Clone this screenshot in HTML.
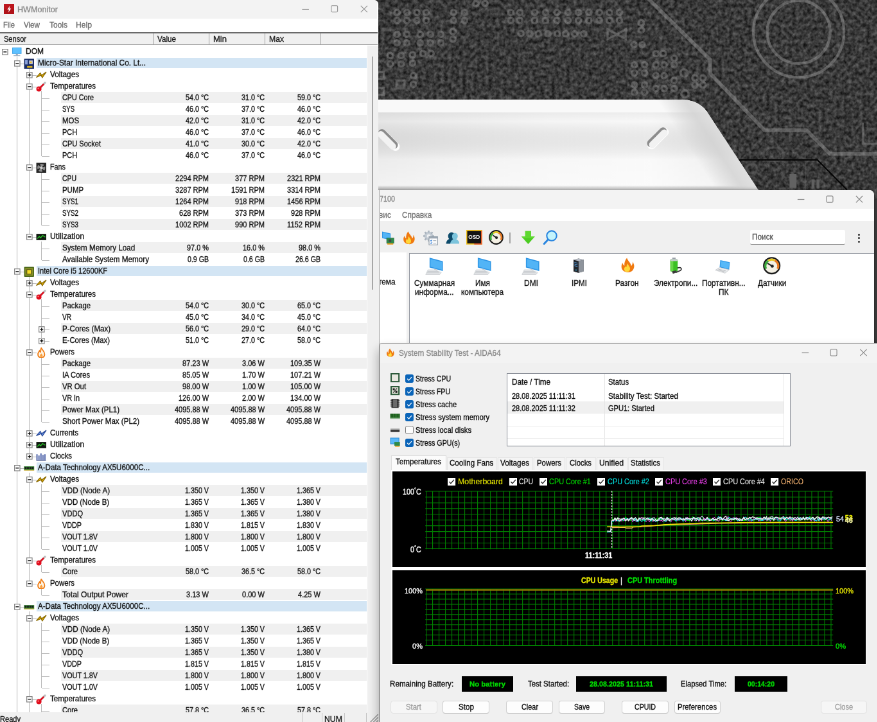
<!DOCTYPE html><html lang="en"><head><meta charset="utf-8"><title>HWMonitor / AIDA64 System Stability Test</title><style>
*{box-sizing:border-box;margin:0;padding:0}
html,body{width:877px;height:722px;overflow:hidden;background:#3b3b3b}
#root{position:absolute;left:0;top:0;width:877px;height:722px;overflow:hidden;zoom:1.5571;transform:scale(0.642219);transform-origin:0 0;will-change:transform}
body{position:relative;font-family:"Liberation Sans","DejaVu Sans",sans-serif;font-size:7.4px;color:#1a1a1a;line-height:1}
.a{position:absolute}
.t{position:absolute;white-space:nowrap;line-height:10px;height:10px;-webkit-text-stroke:0.22px;transform-origin:0 50%}
.r{text-align:right}
.c{text-align:center}
.g{color:#7d7d7d}
</style></head><body><div id="root">
<svg class="a" style="left:0;top:0" width="877" height="722" viewBox="0 0 877 722">
<defs><filter id="nz" x="0" y="0" width="100%" height="100%" color-interpolation-filters="sRGB"><feTurbulence type="fractalNoise" baseFrequency="0.27 0.25" numOctaves="3" seed="11" result="t"/><feColorMatrix in="t" type="matrix" values="0.43 0 0 0 0.012  0.43 0 0 0 0.012  0.43 0 0 0 0.012  0 0 0 0 1"/></filter><linearGradient id="dv" x1="0" y1="0" x2="0" y2="1"><stop offset="0" stop-color="#fbfbfb"/><stop offset="0.12" stop-color="#f9f9f9"/><stop offset="0.16" stop-color="#f0f0f0"/><stop offset="0.5" stop-color="#f6f6f6"/><stop offset="0.85" stop-color="#e9e9e9"/><stop offset="1" stop-color="#e2e2e2"/></linearGradient><linearGradient id="dh" x1="0" y1="0" x2="1" y2="0"><stop offset="0" stop-color="#fff" stop-opacity="0"/><stop offset="0.35" stop-color="#fff" stop-opacity=".55"/><stop offset="0.7" stop-color="#fff" stop-opacity="0"/><stop offset="0.86" stop-color="#c8c8c8" stop-opacity=".5"/><stop offset="1" stop-color="#fff" stop-opacity=".9"/></linearGradient></defs>
<rect x="370" y="0" width="507" height="200" fill="#3e3e3e"/>
<rect x="370" y="0" width="507" height="200" filter="url(#nz)"/>
<g fill="none" stroke="#909090" stroke-width="2.2" opacity=".42">
<circle cx="397.0" cy="12.4" r="2.7"/>
<circle cx="407.0" cy="12.4" r="2.7"/>
<circle cx="417.0" cy="12.4" r="2.7"/>
<circle cx="426.2" cy="12.4" r="2.7"/>
<circle cx="453.5" cy="12.4" r="2.7"/>
<circle cx="464.5" cy="12.4" r="2.7"/>
<circle cx="534.6" cy="12.4" r="2.7"/>
<circle cx="545.5" cy="12.4" r="2.7"/>
<circle cx="557.0" cy="12.4" r="2.7"/>
<circle cx="568.0" cy="12.4" r="2.7"/>
<circle cx="578.4" cy="12.4" r="2.7"/>
<circle cx="588.8" cy="12.4" r="2.7"/>
<circle cx="599.3" cy="12.4" r="2.7"/>
<circle cx="609.4" cy="12.4" r="2.7"/>
<circle cx="619.4" cy="12.4" r="2.7"/>
<circle cx="510.7" cy="12.4" r="2.7"/>
<circle cx="519.8" cy="12.4" r="2.7"/>
<circle cx="397.0" cy="20.4" r="2.7"/>
<circle cx="407.0" cy="20.4" r="2.7"/>
<circle cx="417.0" cy="20.4" r="2.7"/>
<circle cx="426.2" cy="20.4" r="2.7"/>
<circle cx="453.5" cy="20.4" r="2.7"/>
<circle cx="464.5" cy="20.4" r="2.7"/>
<circle cx="534.6" cy="20.4" r="2.7"/>
<circle cx="545.5" cy="20.4" r="2.7"/>
<circle cx="557.0" cy="20.4" r="2.7"/>
<circle cx="568.0" cy="20.4" r="2.7"/>
<circle cx="578.4" cy="20.4" r="2.7"/>
<circle cx="588.8" cy="20.4" r="2.7"/>
<circle cx="599.3" cy="20.4" r="2.7"/>
<circle cx="609.4" cy="20.4" r="2.7"/>
<circle cx="619.4" cy="20.4" r="2.7"/>
<circle cx="510.7" cy="20.4" r="2.7"/>
<circle cx="519.8" cy="20.4" r="2.7"/>
<circle cx="397.0" cy="34.3" r="2.7"/>
<circle cx="406.7" cy="34.3" r="2.7"/>
<circle cx="420.2" cy="34.3" r="2.7"/>
<circle cx="430.4" cy="34.3" r="2.7"/>
<circle cx="440.8" cy="34.3" r="2.7"/>
<circle cx="397.0" cy="42.9" r="2.7"/>
<circle cx="406.7" cy="42.9" r="2.7"/>
<circle cx="420.2" cy="42.9" r="2.7"/>
<circle cx="430.4" cy="42.9" r="2.7"/>
<circle cx="440.8" cy="42.9" r="2.7"/>
<circle cx="453.0" cy="31.4" r="2.7"/>
<circle cx="453.0" cy="39.2" r="2.7"/>
<circle cx="476.0" cy="3.6" r="2.7"/>
<circle cx="485.0" cy="3.6" r="2.7"/>
<circle cx="521.0" cy="33.4" r="2.7"/>
<circle cx="529.3" cy="33.4" r="2.7"/>
<circle cx="390.2" cy="55.5" r="2.7"/>
<circle cx="390.2" cy="64.0" r="2.7"/>
<circle cx="401.2" cy="55.5" r="2.7"/>
<circle cx="401.2" cy="64.0" r="2.7"/>
<circle cx="412.5" cy="54.8" r="2.7"/>
<circle cx="412.5" cy="63.2" r="2.7"/>
<circle cx="423.0" cy="53.6" r="2.7"/>
<circle cx="431.0" cy="53.6" r="2.7"/>
<circle cx="413.4" cy="75.7" r="2.7"/>
<circle cx="413.4" cy="84.3" r="2.7"/>
<circle cx="530.0" cy="33.8" r="2.7"/>
<circle cx="538.2" cy="33.8" r="2.7"/>
<circle cx="547.9" cy="33.8" r="2.7"/>
<circle cx="557.4" cy="33.8" r="2.7"/>
<circle cx="565.6" cy="33.8" r="2.7"/>
<circle cx="574.7" cy="33.8" r="2.7"/>
<circle cx="583.8" cy="33.8" r="2.7"/>
<circle cx="641.3" cy="22.8" r="2.7"/>
<circle cx="641.3" cy="30.1" r="2.7"/>
<circle cx="634.0" cy="44.7" r="2.7"/>
<circle cx="642.2" cy="44.7" r="2.7"/>
<circle cx="655.9" cy="53.5" r="2.7"/>
<circle cx="663.2" cy="53.5" r="2.7"/>
<circle cx="674.2" cy="58.4" r="2.7"/>
<circle cx="634.4" cy="64.8" r="2.7"/>
<circle cx="644.6" cy="64.8" r="2.7"/>
<circle cx="655.9" cy="64.8" r="2.7"/>
<circle cx="664.1" cy="64.8" r="2.7"/>
<circle cx="674.2" cy="64.8" r="2.7"/>
<circle cx="634.4" cy="73.0" r="2.7"/>
<circle cx="644.6" cy="73.0" r="2.7"/>
<circle cx="655.9" cy="75.7" r="2.7"/>
<circle cx="664.1" cy="75.7" r="2.7"/>
<circle cx="674.2" cy="80.3" r="2.7"/>
<circle cx="634.4" cy="84.9" r="2.7"/>
<circle cx="644.6" cy="84.9" r="2.7"/>
<circle cx="655.9" cy="88.5" r="2.7"/>
<circle cx="664.1" cy="88.5" r="2.7"/>
<circle cx="674.2" cy="88.5" r="2.7"/>
<circle cx="634.4" cy="92.2" r="2.7"/>
<circle cx="644.6" cy="92.2" r="2.7"/>
<circle cx="695.0" cy="78.0" r="2.7"/>
<circle cx="703.0" cy="78.0" r="2.7"/>
<circle cx="695.0" cy="85.0" r="2.7"/>
<circle cx="703.0" cy="85.0" r="2.7"/>
<circle cx="684.2" cy="73" r="3.6"/><circle cx="685" cy="94" r="3.6"/>
<rect x="396.5" y="80.5" width="8" height="8"/><rect x="377" y="72" width="7" height="7"/><rect x="377" y="88" width="7" height="7"/>
<path d="M607.6 29.4 L625.8 39 V29.4 L607.6 39 Z"/>
<circle cx="798.7" cy="32" r="31.5" stroke="#a0a0a0" stroke-width="2.8"/><circle cx="798.7" cy="32" r="45.3" stroke="#a0a0a0" stroke-width="2.8"/>
<path d="M648.5 -1 L710.3 59.7 V73.6 L764.4 130.1 H806.4 L830.1 153.9 H880" stroke="#a0a0a0" stroke-width="3.6"/>
<path d="M863 122.8 V143.8 H880" stroke="#909090" stroke-width="2"/>
<rect x="763.5" y="147.8" width="20" height="13" rx="6" stroke="#666"/><circle cx="751.7" cy="168.5" r="5" stroke="#606060"/><path d="M805.5 152 V190" stroke="#5c5c5c" stroke-width="1"/><path d="M732 150 q8 0 8 8" stroke="#606060"/>
</g>
<rect x="789.5" y="174" width="7" height="14" fill="#626262"/><rect x="811.5" y="179.5" width="3" height="9" fill="#606060"/><rect x="816.5" y="179.5" width="3" height="9" fill="#606060"/>
<path d="M738.5 159.9 H817.4 L847 189.8" stroke="#050505" stroke-width="1.3" fill="none"/>
<defs><linearGradient id="dface" x1="378" y1="0" x2="720" y2="0" gradientUnits="userSpaceOnUse"><stop offset="0" stop-color="#e6e6e6"/><stop offset="0.2" stop-color="#ededed"/><stop offset="0.5" stop-color="#f5f5f5"/><stop offset="0.8" stop-color="#f8f8f8"/><stop offset="1" stop-color="#ebebeb"/></linearGradient><linearGradient id="dvert" x1="0" y1="112" x2="0" y2="191" gradientUnits="userSpaceOnUse"><stop offset="0" stop-color="#000" stop-opacity=".045"/><stop offset="0.12" stop-color="#000" stop-opacity="0"/><stop offset="0.6" stop-color="#fff" stop-opacity=".25"/><stop offset="0.93" stop-color="#fff" stop-opacity=".5"/><stop offset="1" stop-color="#000" stop-opacity=".06"/></linearGradient><linearGradient id="dbev" x1="690" y1="150" x2="745" y2="114" gradientUnits="userSpaceOnUse"><stop offset="0" stop-color="#cfcfcf" stop-opacity="0"/><stop offset="0.35" stop-color="#d2d2d2" stop-opacity=".8"/><stop offset="0.62" stop-color="#e2e2e2" stop-opacity=".9"/><stop offset="0.8" stop-color="#fbfbfb" stop-opacity="1"/><stop offset="1" stop-color="#f2f2f2" stop-opacity="1"/></linearGradient><clipPath id="dclip"><path d="M370 99.5 L681 99.5 Q696 99.7 704.5 108.7 L707 111.7 L759 191 L370 191 Z"/></clipPath></defs>
<g clip-path="url(#dclip)">
<rect x="370" y="99" width="400" height="93" fill="url(#dface)"/>
<rect x="370" y="112" width="400" height="80" fill="url(#dvert)"/>
<rect x="370" y="99" width="400" height="13.4" fill="#f9f9f9"/>
<path d="M640 99 L770 99 L770 192 L690 192 Z" fill="url(#dbev)"/>
</g>
<g transform="translate(388.0 139.0)"><rect x="-13.4" y="-4.3" width="26.8" height="8.6" rx="4.3" fill="#fdfdfd" transform="translate(1 1.2) rotate(45)"/><rect x="-12.4" y="-3.9" width="24.8" height="7.8" rx="3.9" fill="#8c8c8c" transform="rotate(45)"/><rect x="-11.8" y="-3.3" width="23.6" height="6.6" rx="3.3" fill="#f2f2f2" transform="translate(-1.2 1.3) rotate(45)"/></g>
<g transform="translate(657.0 137.3)"><rect x="-13.4" y="-4.3" width="26.8" height="8.6" rx="4.3" fill="#fdfdfd" transform="translate(1 1.2) rotate(-45)"/><rect x="-12.4" y="-3.9" width="24.8" height="7.8" rx="3.9" fill="#8c8c8c" transform="rotate(-45)"/><rect x="-11.8" y="-3.3" width="23.6" height="6.6" rx="3.3" fill="#f2f2f2" transform="translate(1.3 1.4) rotate(-45)"/></g>
</svg>
<div class="a" style="left:372.00px;top:189.80px;width:501.80px;height:160.00px;background:#f0f0f0;border-radius:0 4.5px 0 0;box-shadow:0 0 3px rgba(0,0,0,.5);"></div>
<div class="a" style="left:372.00px;top:189.80px;width:501.80px;height:19.20px;background:#f3f3f3;border-radius:0 4.5px 0 0;"></div>
<div class="t g" style="left:379.50px;top:194.60px;font-size:8.09px;transform:scaleX(0.8570);color:#8a8a8a;">7100</div>
<svg class="a" style="left:790px;top:190px" width="84" height="19" viewBox="0 0 84 19" fill="none" stroke="#8a8a8a" stroke-width="0.75"><path d="M7.6 9.3 H14.4"/><rect x="36.6" y="5.9" width="6.4" height="6.4" rx="1"/><path d="M66.1 5.8 L72.7 12.4 M72.7 5.8 L66.1 12.4"/></svg>
<div class="a" style="left:372.00px;top:208.90px;width:501.80px;height:12.30px;background:#ffffff;"></div>
<div class="t g" style="left:379.00px;top:210.70px;font-size:7.98px;transform:scaleX(0.9531);color:#777;">вис</div>
<div class="t g" style="left:402.20px;top:210.70px;font-size:7.98px;transform:scaleX(0.9530);color:#777;">Справка</div>
<svg class="a" style="left:381.50px;top:230.50px" width="13.00" height="15.00" viewBox="0 0 20 22"><path d="M1 1 L14 4 L14 14 L1 11 Z" fill="#2f96e6"/><path d="M2 2.4 L13 5 L13 12.6 L2 10 Z" fill="#52b4f6"/><rect x="8" y="11" width="11" height="8" fill="#2e8a4a" stroke="#1c5a30" stroke-width="0.6"/><rect x="11" y="13" width="4" height="4" fill="#444"/><rect x="9" y="19" width="9" height="2" fill="#e8a020"/></svg>
<svg class="a" style="left:401.50px;top:230.50px" width="14.50" height="14.50" viewBox="0 0 21 20.5"><path d="M10 1 C11 5 15 7 15.5 11.5 C17 10 17.5 8 17.2 6 C19.5 9 20 13 18 16 C16.5 18.6 13.5 19.6 10.5 19.4 C6.5 19.2 3.2 16.8 3 12.8 C2.8 10.6 3.6 8.8 4.4 7.4 C4.8 9 5.6 10.4 6.8 11 C6.4 7.6 7.6 3.6 10 1 Z" fill="#f07a10"/><path d="M10.5 8 C11.5 10.5 14 12 14 15 C14 17.5 12.2 19 10.2 19 C8.2 19 6.4 17.6 6.4 15.4 C6.4 13.8 7.4 12.8 7.8 11.6 C8.4 12.4 8.8 12.8 9.4 12.8 C9.6 11.2 9.8 9.6 10.5 8 Z" fill="#ffd83a"/></svg>
<svg class="a" style="left:423.50px;top:230.50px" width="15.00" height="15.00" viewBox="0 0 22 22"><circle cx="8" cy="8" r="6.5" fill="#c4ccd4"/><circle cx="8" cy="8" r="2.6" fill="#eef0f2"/><path d="M8 0 V3 M8 13 V16 M0 8 H3 M13 8 H16 M2.3 2.3 L4.5 4.5 M11.5 11.5 L13.7 13.7 M2.3 13.7 L4.5 11.5 M11.5 4.5 L13.7 2.3" stroke="#aab4be" stroke-width="2.4"/><rect x="8.5" y="9" width="12.5" height="12" fill="#fdfdfd" stroke="#8a96a2" stroke-width="1"/><rect x="8.5" y="9" width="12.5" height="2.6" fill="#9aa6b2"/><path d="M10.5 14.5 l1 1 l1.6 -2 M10.5 18 l1 1 l1.6 -2" stroke="#2a7ad8" stroke-width="1" fill="none"/><path d="M14.5 14.8 H19 M14.5 18.4 H19" stroke="#8a96a2" stroke-width="0.8"/></svg>
<svg class="a" style="left:445.50px;top:231.00px" width="14.00" height="14.00" viewBox="0 0 20 20"><path d="M13 2.5 C15.8 2.5 17.4 4.8 17.2 7.4 C17 9.4 16 10.8 15.2 11.6 C17.6 12.6 19.4 14.4 19.6 18 L6 18 C6.2 14.4 8 12.6 10.4 11.6 C9.4 10.6 8.6 9.2 8.6 7.2 C8.6 4.6 10.4 2.5 13 2.5 Z" fill="#7cc4dc"/><path d="M8.5 1.5 C10 1.5 11 2.2 11.6 3 C9.6 4 8.8 6 9.2 8.4 C9.4 9.8 10 10.8 10.6 11.6 C8.4 12.6 6.8 14.4 6.4 18 L0.6 18 C0.8 14 2.8 12 5 11 C4 10 3.4 8.6 3.4 6.8 C3.4 3.8 5.6 1.5 8.5 1.5 Z" fill="#0c4a6a"/></svg>
<svg class="a" style="left:466.40px;top:230.20px" width="15.80" height="14.60" viewBox="0 0 22 20"><rect x="0.6" y="0.6" width="20.8" height="18.8" fill="#141414" stroke="#f0c020" stroke-width="1.6"/><path d="M21.2 1 V19.4 H11" stroke="#e85a30" stroke-width="1.4" fill="none"/><text x="11" y="12.6" font-family="Liberation Sans,sans-serif" font-size="7.4" font-weight="bold" fill="#fff" text-anchor="middle">OSD</text></svg>
<svg class="a" style="left:488.50px;top:229.80px" width="14.80" height="14.80" viewBox="0 0 20 20"><circle cx="10" cy="10" r="9" fill="#f4f0e4" stroke="#1a1a1a" stroke-width="1.8"/><path d="M3.4 13.5 A7 7 0 0 1 6 4.4" stroke="#3aa83a" stroke-width="2.4" fill="none"/><path d="M6 4.4 A7 7 0 0 1 13.5 4" stroke="#e8c820" stroke-width="2.4" fill="none"/><path d="M13.5 4 A7 7 0 0 1 16.6 13.5" stroke="#e87820" stroke-width="2.4" fill="none"/><path d="M10.5 10.5 L5.2 7.2" stroke="#222" stroke-width="1.6"/><circle cx="10.5" cy="10.5" r="1.8" fill="#222"/></svg>
<div class="a" style="left:509.40px;top:232.40px;width:0.90px;height:10.80px;background:#a4a4a4;"></div>
<svg class="a" style="left:520.80px;top:230.80px" width="14.60" height="14.00" viewBox="0 0 20 19"><path d="M6 0.5 H14 V8 H19.2 L10 18.5 L0.8 8 H6 Z" fill="#4ccc22"/><path d="M6 0.5 H14 V8 H19.2 L17 10.5 H3 L0.8 8 H6 Z" fill="#6ae03a" opacity=".6"/></svg>
<svg class="a" style="left:542.60px;top:229.60px" width="15.00" height="15.00" viewBox="0 0 20 20"><path d="M2 18.5 L8 12" stroke="#2a86e0" stroke-width="2.6" stroke-linecap="round"/><circle cx="12" cy="7.8" r="6.6" fill="#c4f4fc" stroke="#2a86e0" stroke-width="1.8"/></svg>
<div class="a" style="left:750.00px;top:230.20px;width:95.30px;height:14.20px;background:#ffffff;border-bottom:0.9px solid #8a8a8a;border-radius:1.5px;"></div>
<div class="t" style="left:752.20px;top:232.60px;font-size:7.98px;transform:scaleX(0.9526);color:#555;">Поиск</div>
<div class="a" style="left:857.90px;top:233.70px;width:1.90px;height:1.90px;background:#1a1a1a;border-radius:1px;"></div>
<div class="a" style="left:857.90px;top:237.15px;width:1.90px;height:1.90px;background:#1a1a1a;border-radius:1px;"></div>
<div class="a" style="left:857.90px;top:240.60px;width:1.90px;height:1.90px;background:#1a1a1a;border-radius:1px;"></div>
<div class="a" style="left:379.00px;top:252.60px;width:27.80px;height:95.00px;background:#ffffff;"></div>
<div class="t" style="left:378.20px;top:277.60px;font-size:7.98px;transform:scaleX(0.9529);">тема</div>
<div class="a" style="left:409.10px;top:253.00px;width:464.70px;height:95.00px;background:#ffffff;border-left:0.65px solid #8e939c;border-top:0.65px solid #8e939c;"></div>
<svg class="a" style="left:423.90px;top:257.20px" width="20.00" height="18.00" viewBox="0 0 25 23"><path d="M7 1 L24 5.5 L24 18 L7 13.5 Z" fill="#2f96e6"/><path d="M8.2 2.6 L22.8 6.5 L22.8 16.4 L8.2 12.5 Z" fill="#52b4f6"/><path d="M13 15 L16 15.8 L16 18 L13 18 Z" fill="#c8ccd0"/><path d="M5 16.5 L14 16.5 L22 20 L20 22.5 L2 22.5 Z" fill="#e6e8ea" stroke="#c4c8cc" stroke-width="0.6"/><path d="M4.5 18.5 H18 M3.5 20.3 H19.5" stroke="#b8bcc0" stroke-width="0.6"/></svg>
<div class="t" style="left:414.09px;top:278.50px;font-size:7.98px;transform:scaleX(0.9531);">Суммарная</div>
<div class="t" style="left:414.95px;top:287.90px;font-size:7.98px;transform:scaleX(0.9529);">информа...</div>
<svg class="a" style="left:472.12px;top:257.20px" width="20.00" height="18.00" viewBox="0 0 25 23"><path d="M7 1 L24 5.5 L24 18 L7 13.5 Z" fill="#2f96e6"/><path d="M8.2 2.6 L22.8 6.5 L22.8 16.4 L8.2 12.5 Z" fill="#52b4f6"/><path d="M13 15 L16 15.8 L16 18 L13 18 Z" fill="#c8ccd0"/><path d="M5 16.5 L14 16.5 L22 20 L20 22.5 L2 22.5 Z" fill="#e6e8ea" stroke="#c4c8cc" stroke-width="0.6"/><path d="M4.5 18.5 H18 M3.5 20.3 H19.5" stroke="#b8bcc0" stroke-width="0.6"/></svg>
<div class="t" style="left:475.22px;top:278.50px;font-size:7.98px;transform:scaleX(0.9527);">Имя</div>
<div class="t" style="left:461.36px;top:287.90px;font-size:7.98px;transform:scaleX(0.9527);">компьютера</div>
<svg class="a" style="left:520.34px;top:257.20px" width="20.00" height="18.00" viewBox="0 0 25 23"><path d="M7 1 L24 5.5 L24 18 L7 13.5 Z" fill="#2f96e6"/><path d="M8.2 2.6 L22.8 6.5 L22.8 16.4 L8.2 12.5 Z" fill="#52b4f6"/><path d="M13 15 L16 15.8 L16 18 L13 18 Z" fill="#c8ccd0"/><path d="M5 16.5 L14 16.5 L22 20 L20 22.5 L2 22.5 Z" fill="#e6e8ea" stroke="#c4c8cc" stroke-width="0.6"/><path d="M4.5 18.5 H18 M3.5 20.3 H19.5" stroke="#b8bcc0" stroke-width="0.6"/></svg>
<div class="t" style="left:523.78px;top:278.50px;font-size:7.98px;transform:scaleX(0.9671);">DMI</div>
<svg class="a" style="left:571.86px;top:257.20px" width="14.00" height="17.40" viewBox="0 0 22 24"><path d="M3 3 L11 0.8 L19 3 L19 21 L11 23.4 L3 21 Z" fill="#3a3e46"/><path d="M3 3 L11 5 L11 23.4 L3 21 Z" fill="#23262c"/><path d="M11 5 L19 3 L19 21 L11 23.4 Z" fill="#8e949c"/><path d="M3 3 L11 0.8 L19 3 L11 5 Z" fill="#b8bcc4"/><path d="M4.5 7 L9.5 8.2 M4.5 9.6 L9.5 10.8 M4.5 12.2 L9.5 13.4" stroke="#5ab0ff" stroke-width="0.9"/><circle cx="7" cy="19" r="0.9" fill="#3ad0ff"/></svg>
<div class="t" style="left:571.35px;top:278.50px;font-size:7.98px;transform:scaleX(0.9404);">IPMI</div>
<svg class="a" style="left:619.28px;top:257.00px" width="16.40" height="16.40" viewBox="0 0 21 20.5"><path d="M10 1 C11 5 15 7 15.5 11.5 C17 10 17.5 8 17.2 6 C19.5 9 20 13 18 16 C16.5 18.6 13.5 19.6 10.5 19.4 C6.5 19.2 3.2 16.8 3 12.8 C2.8 10.6 3.6 8.8 4.4 7.4 C4.8 9 5.6 10.4 6.8 11 C6.4 7.6 7.6 3.6 10 1 Z" fill="#f07a10"/><path d="M10.5 8 C11.5 10.5 14 12 14 15 C14 17.5 12.2 19 10.2 19 C8.2 19 6.4 17.6 6.4 15.4 C6.4 13.8 7.4 12.8 7.8 11.6 C8.4 12.4 8.8 12.8 9.4 12.8 C9.6 11.2 9.8 9.6 10.5 8 Z" fill="#ffd83a"/></svg>
<div class="t" style="left:615.55px;top:278.50px;font-size:7.98px;transform:scaleX(0.9524);">Разгон</div>
<svg class="a" style="left:668.00px;top:256.80px" width="15.40" height="17.60" viewBox="0 0 23 25"><rect x="6.5" y="0.5" width="5" height="2.5" fill="#9aa0a8"/><rect x="3.5" y="2.5" width="11" height="19" rx="2" fill="#3cc024"/><rect x="3.5" y="2.5" width="4.5" height="19" rx="2" fill="#7ae05a" opacity=".7"/><rect x="3.5" y="2.5" width="11" height="3" rx="1.5" fill="#c8ccd0"/><path d="M14 16 C20 14 22 18 18 20 L12 22.5" stroke="#333" stroke-width="1.6" fill="none"/><path d="M6 21 L12 19.5 L13.5 22.5 L7.5 24.5 Z" fill="#3a3a3a"/></svg>
<div class="t" style="left:653.55px;top:278.50px;font-size:7.98px;transform:scaleX(0.9532);">Электропи...</div>
<svg class="a" style="left:714.22px;top:258.60px" width="17.00" height="15.00" viewBox="0 0 23 22"><path d="M8 2 L22 5 L21 16 L7 12.6 Z" fill="#2f96e6"/><path d="M9 3.4 L21 6 L20.2 14.6 L8.2 11.6 Z" fill="#56b8f8"/><path d="M7 12.6 L21 16 L15 21 L0.8 16.6 Z" fill="#eceef0" stroke="#b4b8bc" stroke-width="0.6"/><path d="M5 15 L16 17.8 M3.6 16.2 L14.4 19" stroke="#a8acb0" stroke-width="0.7"/></svg>
<div class="t" style="left:701.99px;top:278.50px;font-size:7.98px;transform:scaleX(0.9527);">Портативн...</div>
<div class="t" style="left:718.77px;top:287.90px;font-size:7.98px;transform:scaleX(0.9533);">ПК</div>
<svg class="a" style="left:763.14px;top:257.00px" width="17.60" height="17.60" viewBox="0 0 20 20"><circle cx="10" cy="10" r="9" fill="#f4f0e4" stroke="#1a1a1a" stroke-width="1.8"/><path d="M3.4 13.5 A7 7 0 0 1 6 4.4" stroke="#3aa83a" stroke-width="2.4" fill="none"/><path d="M6 4.4 A7 7 0 0 1 13.5 4" stroke="#e8c820" stroke-width="2.4" fill="none"/><path d="M13.5 4 A7 7 0 0 1 16.6 13.5" stroke="#e87820" stroke-width="2.4" fill="none"/><path d="M10.5 10.5 L5.2 7.2" stroke="#222" stroke-width="1.6"/><circle cx="10.5" cy="10.5" r="1.8" fill="#222"/></svg>
<div class="t" style="left:757.71px;top:278.50px;font-size:7.98px;transform:scaleX(0.9534);">Датчики</div>
<div class="a" style="left:378.30px;top:190.00px;width:1.00px;height:540.00px;background:#f0f0f0;"></div>
<div class="a" style="left:379.20px;top:190.00px;width:0.65px;height:154.00px;background:#c6c6c6;"></div>
<div class="a" style="left:0.00px;top:0.00px;width:378.50px;height:722.00px;background:#ffffff;border-radius:0 4px 0 0;"></div>
<div class="a" style="left:0.00px;top:0.00px;width:376.90px;height:18.80px;background:#f3f3f3;border-radius:0 3px 0 0;"></div>
<svg class="a" style="left:3.6px;top:3.6px" width="10.6" height="10.6" viewBox="0 0 16 16"><rect width="16" height="16" rx="1" fill="#b01218"/><rect x="0" y="0" width="16" height="8" rx="1" fill="#c4181f" opacity=".6"/><path d="M9.2 2.6 L5.2 8.6 L7.8 8.6 L6.6 13.4 L10.8 7 L8.2 7 Z" fill="#fff"/></svg>
<div class="t g" style="left:17.40px;top:5.10px;font-size:7.98px;transform:scaleX(1.0151);color:#8a8a8a;">HWMonitor</div>
<svg class="a" style="left:295px;top:0" width="83" height="19" viewBox="0 0 83 19" fill="none" stroke="#909090" stroke-width="0.7"><path d="M7.3 9.3 H14.1"/><rect x="36.4" y="5.6" width="6.4" height="6.4" rx="1"/><path d="M66 5.7 L72.6 12.3 M72.6 5.7 L66 12.3"/></svg>
<div class="t g" style="left:3.40px;top:20.60px;font-size:7.98px;transform:scaleX(0.9000);color:#6f6f6f;">File</div>
<div class="t g" style="left:24.00px;top:20.60px;font-size:7.98px;transform:scaleX(0.9367);color:#6f6f6f;">View</div>
<div class="t g" style="left:49.40px;top:20.60px;font-size:7.98px;transform:scaleX(0.9663);color:#6f6f6f;">Tools</div>
<div class="t g" style="left:76.00px;top:20.60px;font-size:7.98px;transform:scaleX(0.9796);color:#6f6f6f;">Help</div>
<div class="a" style="left:0.00px;top:32.30px;width:377.70px;height:0.90px;background:#6a6a6a;"></div>
<div class="a" style="left:0.00px;top:33.20px;width:377.50px;height:11.00px;background:#f0f0f0;"></div>
<div class="a" style="left:0.00px;top:44.00px;width:377.50px;height:0.70px;background:#9c9c9c;"></div>
<div class="a" style="left:152.85px;top:33.40px;width:0.70px;height:10.60px;background:#9c9c9c;"></div>
<div class="a" style="left:208.65px;top:33.40px;width:0.70px;height:10.60px;background:#9c9c9c;"></div>
<div class="a" style="left:264.55px;top:33.40px;width:0.70px;height:10.60px;background:#9c9c9c;"></div>
<div class="a" style="left:320.35px;top:33.40px;width:0.70px;height:10.60px;background:#9c9c9c;"></div>
<div class="t" style="left:3.80px;top:34.50px;font-size:7.88px;transform:scaleX(0.9025);color:#222;">Sensor</div>
<div class="t" style="left:157.60px;top:34.50px;font-size:7.88px;transform:scaleX(0.9536);color:#222;">Value</div>
<div class="t" style="left:213.50px;top:34.50px;font-size:7.88px;transform:scaleX(1.0643);color:#222;">Min</div>
<div class="t" style="left:269.40px;top:34.50px;font-size:7.88px;transform:scaleX(0.9941);color:#222;">Max</div>
<div class="a" style="left:367.20px;top:45.40px;width:11.30px;height:667.00px;background:#f0f0f0;"></div>
<div class="a" style="left:372.30px;top:56.50px;width:0.90px;height:233.20px;background:#5e5e5e;"></div>
<div class="a" style="left:16.98px;top:56.53px;width:0.64px;height:655.77px;background:#bcbcbc;"></div>
<div class="a" style="left:29.18px;top:68.09px;width:0.64px;height:168.90px;background:#bcbcbc;"></div>
<div class="a" style="left:41.28px;top:91.21px;width:0.64px;height:64.86px;background:#bcbcbc;"></div>
<div class="a" style="left:41.28px;top:172.13px;width:0.64px;height:53.30px;background:#bcbcbc;"></div>
<div class="a" style="left:41.28px;top:241.49px;width:0.64px;height:18.62px;background:#bcbcbc;"></div>
<div class="a" style="left:29.18px;top:276.17px;width:0.64px;height:180.46px;background:#bcbcbc;"></div>
<div class="a" style="left:41.28px;top:299.29px;width:0.64px;height:41.74px;background:#bcbcbc;"></div>
<div class="a" style="left:41.28px;top:357.09px;width:0.64px;height:64.86px;background:#bcbcbc;"></div>
<div class="a" style="left:29.18px;top:472.69px;width:0.64px;height:111.10px;background:#bcbcbc;"></div>
<div class="a" style="left:41.28px;top:484.25px;width:0.64px;height:64.86px;background:#bcbcbc;"></div>
<div class="a" style="left:41.28px;top:565.17px;width:0.64px;height:7.06px;background:#bcbcbc;"></div>
<div class="a" style="left:41.28px;top:588.29px;width:0.64px;height:7.06px;background:#bcbcbc;"></div>
<div class="a" style="left:29.18px;top:611.41px;width:0.64px;height:100.89px;background:#bcbcbc;"></div>
<div class="a" style="left:41.28px;top:622.97px;width:0.64px;height:64.86px;background:#bcbcbc;"></div>
<div class="a" style="left:41.28px;top:703.89px;width:0.64px;height:8.41px;background:#bcbcbc;"></div>
<svg class="a" style="left:2.10px;top:48.93px" width="6.20" height="6.20" viewBox="0 0 9 9"><rect x="0.6" y="0.6" width="7.8" height="7.8" fill="#fff" stroke="#868686" stroke-width="1.15"/><path d="M2.2 4.5 H6.8" stroke="#111" stroke-width="1.3" fill="none"/></svg>
<svg class="a" style="left:11.80px;top:46.63px" width="10.6" height="10.6" viewBox="0 0 16 16"><rect x="1" y="1" width="14" height="9.5" fill="#3aa0e8"/><rect x="1.8" y="1.8" width="12.4" height="7.9" fill="#5cc0ff"/><rect x="6.5" y="10.5" width="3" height="2" fill="#9ab"/><rect x="3" y="12.5" width="10" height="1.3" fill="#9fb4c8"/></svg>
<div class="t" style="left:25.80px;top:47.03px;font-size:7.88px;transform:scaleX(0.9803);color:#151515;">DOM</div>
<div class="a" style="left:36.60px;top:57.71px;width:330.00px;height:10.30px;background:#d3e5f4;"></div>
<div class="a" style="left:17.30px;top:63.27px;width:7.00px;height:0.64px;background:#bcbcbc;"></div>
<svg class="a" style="left:14.20px;top:60.49px" width="6.20" height="6.20" viewBox="0 0 9 9"><rect x="0.6" y="0.6" width="7.8" height="7.8" fill="#fff" stroke="#868686" stroke-width="1.15"/><path d="M2.2 4.5 H6.8" stroke="#111" stroke-width="1.3" fill="none"/></svg>
<svg class="a" style="left:23.90px;top:58.19px" width="10.6" height="10.6" viewBox="0 0 16 16"><rect x="0.5" y="0.5" width="15" height="15" fill="#1c2f66"/><rect x="2" y="2" width="4" height="7" fill="#8aa0d8"/><rect x="8" y="3" width="5.5" height="5.5" fill="#c9c9d8"/><rect x="9.6" y="4.6" width="2.3" height="2.3" fill="#e8c020"/><rect x="5" y="11.5" width="8" height="2.6" fill="#d8b020"/></svg>
<div class="t" style="left:37.90px;top:58.59px;font-size:7.88px;transform:scaleX(0.9686);color:#151515;">Micro-Star International Co. Lt...</div>
<div class="a" style="left:29.50px;top:74.83px;width:7.00px;height:0.64px;background:#bcbcbc;"></div>
<svg class="a" style="left:26.40px;top:72.05px" width="6.20" height="6.20" viewBox="0 0 9 9"><rect x="0.6" y="0.6" width="7.8" height="7.8" fill="#fff" stroke="#868686" stroke-width="1.15"/><path d="M2.2 4.5 H6.8 M4.5 2.2 V6.8" stroke="#111" stroke-width="1.3" fill="none"/></svg>
<svg class="a" style="left:36.10px;top:69.75px" width="10.6" height="10.6" viewBox="0 0 16 16"><path d="M0.5 11 L6.5 4.5 L8.5 8 L15.5 3 L9.5 11.5 L7.5 8 Z" fill="#e8b000" stroke="#8a6a00" stroke-width="1.2"/></svg>
<div class="t" style="left:50.10px;top:70.15px;font-size:7.88px;transform:scaleX(0.9583);color:#151515;">Voltages</div>
<div class="a" style="left:29.50px;top:86.39px;width:7.00px;height:0.64px;background:#bcbcbc;"></div>
<svg class="a" style="left:26.40px;top:83.61px" width="6.20" height="6.20" viewBox="0 0 9 9"><rect x="0.6" y="0.6" width="7.8" height="7.8" fill="#fff" stroke="#868686" stroke-width="1.15"/><path d="M2.2 4.5 H6.8" stroke="#111" stroke-width="1.3" fill="none"/></svg>
<svg class="a" style="left:36.10px;top:81.31px" width="10.6" height="10.6" viewBox="0 0 16 16"><path d="M5 10.5 L13.6 1.8" stroke="#bdbdbd" stroke-width="3" stroke-linecap="round"/><path d="M4.5 11 L11 4.5" stroke="#e00c1c" stroke-width="2.4" stroke-linecap="round"/><circle cx="4.4" cy="11.2" r="3.9" fill="#e00c1c"/><circle cx="3.4" cy="10.2" r="1.1" fill="#ff8a8a"/></svg>
<div class="t" style="left:50.10px;top:81.71px;font-size:7.88px;transform:scaleX(0.9487);color:#151515;">Temperatures</div>
<div class="a" style="left:61.00px;top:92.04px;width:305.60px;height:10.90px;background:#f0f0f0;"></div>
<div class="a" style="left:41.60px;top:97.95px;width:7.70px;height:0.64px;background:#bcbcbc;"></div>
<div class="t" style="left:62.30px;top:93.27px;font-size:7.88px;transform:scaleX(0.8787);color:#151515;">CPU Core</div>
<div class="t" style="left:185.58px;top:93.27px;font-size:7.88px;transform:scaleX(0.8787);color:#151515;">54.0 °C</div>
<div class="t" style="left:241.48px;top:93.27px;font-size:7.88px;transform:scaleX(0.8787);color:#151515;">31.0 °C</div>
<div class="t" style="left:297.48px;top:93.27px;font-size:7.88px;transform:scaleX(0.8787);color:#151515;">59.0 °C</div>
<div class="a" style="left:41.60px;top:109.51px;width:7.70px;height:0.64px;background:#bcbcbc;"></div>
<div class="t" style="left:62.30px;top:104.83px;font-size:7.88px;transform:scaleX(0.7755);color:#151515;">SYS</div>
<div class="t" style="left:185.58px;top:104.83px;font-size:7.88px;transform:scaleX(0.8787);color:#151515;">46.0 °C</div>
<div class="t" style="left:241.48px;top:104.83px;font-size:7.88px;transform:scaleX(0.8787);color:#151515;">37.0 °C</div>
<div class="t" style="left:297.48px;top:104.83px;font-size:7.88px;transform:scaleX(0.8787);color:#151515;">46.0 °C</div>
<div class="a" style="left:61.00px;top:115.16px;width:305.60px;height:10.90px;background:#f0f0f0;"></div>
<div class="a" style="left:41.60px;top:121.07px;width:7.70px;height:0.64px;background:#bcbcbc;"></div>
<div class="t" style="left:62.30px;top:116.39px;font-size:7.88px;transform:scaleX(0.9325);color:#151515;">MOS</div>
<div class="t" style="left:185.58px;top:116.39px;font-size:7.88px;transform:scaleX(0.8787);color:#151515;">42.0 °C</div>
<div class="t" style="left:241.48px;top:116.39px;font-size:7.88px;transform:scaleX(0.8787);color:#151515;">31.0 °C</div>
<div class="t" style="left:297.48px;top:116.39px;font-size:7.88px;transform:scaleX(0.8787);color:#151515;">42.0 °C</div>
<div class="a" style="left:41.60px;top:132.63px;width:7.70px;height:0.64px;background:#bcbcbc;"></div>
<div class="t" style="left:62.30px;top:127.95px;font-size:7.88px;transform:scaleX(0.8902);color:#151515;">PCH</div>
<div class="t" style="left:185.58px;top:127.95px;font-size:7.88px;transform:scaleX(0.8787);color:#151515;">46.0 °C</div>
<div class="t" style="left:241.48px;top:127.95px;font-size:7.88px;transform:scaleX(0.8787);color:#151515;">37.0 °C</div>
<div class="t" style="left:297.48px;top:127.95px;font-size:7.88px;transform:scaleX(0.8787);color:#151515;">46.0 °C</div>
<div class="a" style="left:61.00px;top:138.28px;width:305.60px;height:10.90px;background:#f0f0f0;"></div>
<div class="a" style="left:41.60px;top:144.19px;width:7.70px;height:0.64px;background:#bcbcbc;"></div>
<div class="t" style="left:62.30px;top:139.51px;font-size:7.88px;transform:scaleX(0.9000);color:#151515;">CPU Socket</div>
<div class="t" style="left:185.58px;top:139.51px;font-size:7.88px;transform:scaleX(0.8787);color:#151515;">41.0 °C</div>
<div class="t" style="left:241.48px;top:139.51px;font-size:7.88px;transform:scaleX(0.8787);color:#151515;">30.0 °C</div>
<div class="t" style="left:297.48px;top:139.51px;font-size:7.88px;transform:scaleX(0.8787);color:#151515;">42.0 °C</div>
<div class="a" style="left:41.60px;top:155.75px;width:7.70px;height:0.64px;background:#bcbcbc;"></div>
<div class="t" style="left:62.30px;top:151.07px;font-size:7.88px;transform:scaleX(0.8902);color:#151515;">PCH</div>
<div class="t" style="left:185.58px;top:151.07px;font-size:7.88px;transform:scaleX(0.8787);color:#151515;">46.0 °C</div>
<div class="t" style="left:241.48px;top:151.07px;font-size:7.88px;transform:scaleX(0.8787);color:#151515;">37.0 °C</div>
<div class="t" style="left:297.48px;top:151.07px;font-size:7.88px;transform:scaleX(0.8787);color:#151515;">46.0 °C</div>
<div class="a" style="left:29.50px;top:167.31px;width:7.00px;height:0.64px;background:#bcbcbc;"></div>
<svg class="a" style="left:26.40px;top:164.53px" width="6.20" height="6.20" viewBox="0 0 9 9"><rect x="0.6" y="0.6" width="7.8" height="7.8" fill="#fff" stroke="#868686" stroke-width="1.15"/><path d="M2.2 4.5 H6.8" stroke="#111" stroke-width="1.3" fill="none"/></svg>
<svg class="a" style="left:36.10px;top:162.23px" width="10.6" height="10.6" viewBox="0 0 16 16"><rect x="0.5" y="0.5" width="15" height="15" fill="#2a2a2a"/><circle cx="8" cy="8" r="6" fill="#8c8c8c"/><path d="M8 8 L3 3 L6 2 Z M8 8 L13 3 L14 6 Z M8 8 L13 13 L10 14 Z M8 8 L3 13 L2 10 Z" fill="#222"/><circle cx="8" cy="8" r="2" fill="#d0d0d0"/></svg>
<div class="t" style="left:50.10px;top:162.63px;font-size:7.88px;transform:scaleX(0.8815);color:#151515;">Fans</div>
<div class="a" style="left:61.00px;top:172.96px;width:305.60px;height:10.90px;background:#f0f0f0;"></div>
<div class="a" style="left:41.60px;top:178.87px;width:7.70px;height:0.64px;background:#bcbcbc;"></div>
<div class="t" style="left:62.30px;top:174.19px;font-size:7.88px;transform:scaleX(0.8515);color:#151515;">CPU</div>
<div class="t" style="left:175.30px;top:174.19px;font-size:7.88px;transform:scaleX(0.8992);color:#151515;">2294 RPM</div>
<div class="t" style="left:235.06px;top:174.19px;font-size:7.88px;transform:scaleX(0.9016);color:#151515;">377 RPM</div>
<div class="t" style="left:287.20px;top:174.19px;font-size:7.88px;transform:scaleX(0.8992);color:#151515;">2321 RPM</div>
<div class="a" style="left:41.60px;top:190.43px;width:7.70px;height:0.64px;background:#bcbcbc;"></div>
<div class="t" style="left:62.30px;top:185.75px;font-size:7.88px;transform:scaleX(0.9329);color:#151515;">PUMP</div>
<div class="t" style="left:175.30px;top:185.75px;font-size:7.88px;transform:scaleX(0.8992);color:#151515;">3287 RPM</div>
<div class="t" style="left:231.20px;top:185.75px;font-size:7.88px;transform:scaleX(0.8992);color:#151515;">1591 RPM</div>
<div class="t" style="left:287.20px;top:185.75px;font-size:7.88px;transform:scaleX(0.8992);color:#151515;">3314 RPM</div>
<div class="a" style="left:61.00px;top:196.08px;width:305.60px;height:10.90px;background:#f0f0f0;"></div>
<div class="a" style="left:41.60px;top:201.99px;width:7.70px;height:0.64px;background:#bcbcbc;"></div>
<div class="t" style="left:62.30px;top:197.31px;font-size:7.88px;transform:scaleX(0.7984);color:#151515;">SYS1</div>
<div class="t" style="left:175.30px;top:197.31px;font-size:7.88px;transform:scaleX(0.8992);color:#151515;">1264 RPM</div>
<div class="t" style="left:235.06px;top:197.31px;font-size:7.88px;transform:scaleX(0.9016);color:#151515;">918 RPM</div>
<div class="t" style="left:287.20px;top:197.31px;font-size:7.88px;transform:scaleX(0.8992);color:#151515;">1456 RPM</div>
<div class="a" style="left:41.60px;top:213.55px;width:7.70px;height:0.64px;background:#bcbcbc;"></div>
<div class="t" style="left:62.30px;top:208.87px;font-size:7.88px;transform:scaleX(0.7984);color:#151515;">SYS2</div>
<div class="t" style="left:179.16px;top:208.87px;font-size:7.88px;transform:scaleX(0.9016);color:#151515;">628 RPM</div>
<div class="t" style="left:235.06px;top:208.87px;font-size:7.88px;transform:scaleX(0.9016);color:#151515;">373 RPM</div>
<div class="t" style="left:291.06px;top:208.87px;font-size:7.88px;transform:scaleX(0.9016);color:#151515;">928 RPM</div>
<div class="a" style="left:61.00px;top:219.20px;width:305.60px;height:10.90px;background:#f0f0f0;"></div>
<div class="a" style="left:41.60px;top:225.11px;width:7.70px;height:0.64px;background:#bcbcbc;"></div>
<div class="t" style="left:62.30px;top:220.43px;font-size:7.88px;transform:scaleX(0.7984);color:#151515;">SYS3</div>
<div class="t" style="left:175.30px;top:220.43px;font-size:7.88px;transform:scaleX(0.8992);color:#151515;">1002 RPM</div>
<div class="t" style="left:235.06px;top:220.43px;font-size:7.88px;transform:scaleX(0.9016);color:#151515;">990 RPM</div>
<div class="t" style="left:287.20px;top:220.43px;font-size:7.88px;transform:scaleX(0.9134);color:#151515;">1152 RPM</div>
<div class="a" style="left:29.50px;top:236.67px;width:7.00px;height:0.64px;background:#bcbcbc;"></div>
<svg class="a" style="left:26.40px;top:233.89px" width="6.20" height="6.20" viewBox="0 0 9 9"><rect x="0.6" y="0.6" width="7.8" height="7.8" fill="#fff" stroke="#868686" stroke-width="1.15"/><path d="M2.2 4.5 H6.8" stroke="#111" stroke-width="1.3" fill="none"/></svg>
<svg class="a" style="left:36.10px;top:231.59px" width="10.6" height="10.6" viewBox="0 0 16 16"><rect x="0.5" y="3" width="15" height="9.5" fill="#121a12"/><path d="M2 10 L5 7 L7 9 L10 5.5 L14 8" stroke="#28c828" stroke-width="1.3" fill="none"/></svg>
<div class="t" style="left:50.10px;top:231.99px;font-size:7.88px;color:#151515;">Utilization</div>
<div class="a" style="left:61.00px;top:242.32px;width:305.60px;height:10.90px;background:#f0f0f0;"></div>
<div class="a" style="left:41.60px;top:248.23px;width:7.70px;height:0.64px;background:#bcbcbc;"></div>
<div class="t" style="left:62.30px;top:243.55px;font-size:7.88px;transform:scaleX(0.9494);color:#151515;">System Memory Load</div>
<div class="t" style="left:186.86px;top:243.55px;font-size:7.88px;transform:scaleX(0.8924);color:#151515;">97.0 %</div>
<div class="t" style="left:242.76px;top:243.55px;font-size:7.88px;transform:scaleX(0.8924);color:#151515;">16.0 %</div>
<div class="t" style="left:298.76px;top:243.55px;font-size:7.88px;transform:scaleX(0.8924);color:#151515;">98.0 %</div>
<div class="a" style="left:41.60px;top:259.79px;width:7.70px;height:0.64px;background:#bcbcbc;"></div>
<div class="t" style="left:62.30px;top:255.11px;font-size:7.88px;transform:scaleX(0.9557);color:#151515;">Available System Memory</div>
<div class="t" style="left:187.51px;top:255.11px;font-size:7.88px;transform:scaleX(0.8661);color:#151515;">0.9 GB</div>
<div class="t" style="left:243.41px;top:255.11px;font-size:7.88px;transform:scaleX(0.8661);color:#151515;">0.6 GB</div>
<div class="t" style="left:295.55px;top:255.11px;font-size:7.88px;transform:scaleX(0.8684);color:#151515;">26.6 GB</div>
<div class="a" style="left:36.60px;top:265.79px;width:330.00px;height:10.30px;background:#d3e5f4;"></div>
<div class="a" style="left:17.30px;top:271.35px;width:7.00px;height:0.64px;background:#bcbcbc;"></div>
<svg class="a" style="left:14.20px;top:268.57px" width="6.20" height="6.20" viewBox="0 0 9 9"><rect x="0.6" y="0.6" width="7.8" height="7.8" fill="#fff" stroke="#868686" stroke-width="1.15"/><path d="M2.2 4.5 H6.8" stroke="#111" stroke-width="1.3" fill="none"/></svg>
<svg class="a" style="left:23.90px;top:266.27px" width="10.6" height="10.6" viewBox="0 0 16 16"><rect x="0.5" y="0.5" width="15" height="15" rx="1" fill="#4e6a1c"/><rect x="2.2" y="2.2" width="11.6" height="11.6" fill="#8a9428"/><rect x="4" y="4" width="8" height="8" fill="#5e5a18"/><rect x="5.2" y="5.2" width="5.6" height="5.6" fill="#f4dc28"/></svg>
<div class="t" style="left:37.90px;top:266.67px;font-size:7.88px;transform:scaleX(0.9070);color:#151515;">Intel Core i5 12600KF</div>
<div class="a" style="left:29.50px;top:282.91px;width:7.00px;height:0.64px;background:#bcbcbc;"></div>
<svg class="a" style="left:26.40px;top:280.13px" width="6.20" height="6.20" viewBox="0 0 9 9"><rect x="0.6" y="0.6" width="7.8" height="7.8" fill="#fff" stroke="#868686" stroke-width="1.15"/><path d="M2.2 4.5 H6.8 M4.5 2.2 V6.8" stroke="#111" stroke-width="1.3" fill="none"/></svg>
<svg class="a" style="left:36.10px;top:277.83px" width="10.6" height="10.6" viewBox="0 0 16 16"><path d="M0.5 11 L6.5 4.5 L8.5 8 L15.5 3 L9.5 11.5 L7.5 8 Z" fill="#e8b000" stroke="#8a6a00" stroke-width="1.2"/></svg>
<div class="t" style="left:50.10px;top:278.23px;font-size:7.88px;transform:scaleX(0.9583);color:#151515;">Voltages</div>
<div class="a" style="left:29.50px;top:294.47px;width:7.00px;height:0.64px;background:#bcbcbc;"></div>
<svg class="a" style="left:26.40px;top:291.69px" width="6.20" height="6.20" viewBox="0 0 9 9"><rect x="0.6" y="0.6" width="7.8" height="7.8" fill="#fff" stroke="#868686" stroke-width="1.15"/><path d="M2.2 4.5 H6.8" stroke="#111" stroke-width="1.3" fill="none"/></svg>
<svg class="a" style="left:36.10px;top:289.39px" width="10.6" height="10.6" viewBox="0 0 16 16"><path d="M5 10.5 L13.6 1.8" stroke="#bdbdbd" stroke-width="3" stroke-linecap="round"/><path d="M4.5 11 L11 4.5" stroke="#e00c1c" stroke-width="2.4" stroke-linecap="round"/><circle cx="4.4" cy="11.2" r="3.9" fill="#e00c1c"/><circle cx="3.4" cy="10.2" r="1.1" fill="#ff8a8a"/></svg>
<div class="t" style="left:50.10px;top:289.79px;font-size:7.88px;transform:scaleX(0.9487);color:#151515;">Temperatures</div>
<div class="a" style="left:61.00px;top:300.12px;width:305.60px;height:10.90px;background:#f0f0f0;"></div>
<div class="a" style="left:41.60px;top:306.03px;width:7.70px;height:0.64px;background:#bcbcbc;"></div>
<div class="t" style="left:62.30px;top:301.35px;font-size:7.88px;transform:scaleX(0.9236);color:#151515;">Package</div>
<div class="t" style="left:185.58px;top:301.35px;font-size:7.88px;transform:scaleX(0.8787);color:#151515;">54.0 °C</div>
<div class="t" style="left:241.48px;top:301.35px;font-size:7.88px;transform:scaleX(0.8787);color:#151515;">30.0 °C</div>
<div class="t" style="left:297.48px;top:301.35px;font-size:7.88px;transform:scaleX(0.8787);color:#151515;">65.0 °C</div>
<div class="a" style="left:41.60px;top:317.59px;width:7.70px;height:0.64px;background:#bcbcbc;"></div>
<div class="t" style="left:62.30px;top:312.91px;font-size:7.88px;transform:scaleX(0.8232);color:#151515;">VR</div>
<div class="t" style="left:185.58px;top:312.91px;font-size:7.88px;transform:scaleX(0.8787);color:#151515;">45.0 °C</div>
<div class="t" style="left:241.48px;top:312.91px;font-size:7.88px;transform:scaleX(0.8787);color:#151515;">34.0 °C</div>
<div class="t" style="left:297.48px;top:312.91px;font-size:7.88px;transform:scaleX(0.8787);color:#151515;">45.0 °C</div>
<div class="a" style="left:61.00px;top:323.24px;width:305.60px;height:10.90px;background:#f0f0f0;"></div>
<div class="a" style="left:41.60px;top:329.15px;width:7.70px;height:0.64px;background:#bcbcbc;"></div>
<svg class="a" style="left:38.50px;top:326.37px" width="6.20" height="6.20" viewBox="0 0 9 9"><rect x="0.6" y="0.6" width="7.8" height="7.8" fill="#fff" stroke="#868686" stroke-width="1.15"/><path d="M2.2 4.5 H6.8 M4.5 2.2 V6.8" stroke="#111" stroke-width="1.3" fill="none"/></svg>
<div class="t" style="left:62.30px;top:324.47px;font-size:7.88px;transform:scaleX(0.9427);color:#151515;">P-Cores (Max)</div>
<div class="t" style="left:185.58px;top:324.47px;font-size:7.88px;transform:scaleX(0.8787);color:#151515;">56.0 °C</div>
<div class="t" style="left:241.48px;top:324.47px;font-size:7.88px;transform:scaleX(0.8787);color:#151515;">29.0 °C</div>
<div class="t" style="left:297.48px;top:324.47px;font-size:7.88px;transform:scaleX(0.8787);color:#151515;">64.0 °C</div>
<div class="a" style="left:41.60px;top:340.71px;width:7.70px;height:0.64px;background:#bcbcbc;"></div>
<svg class="a" style="left:38.50px;top:337.93px" width="6.20" height="6.20" viewBox="0 0 9 9"><rect x="0.6" y="0.6" width="7.8" height="7.8" fill="#fff" stroke="#868686" stroke-width="1.15"/><path d="M2.2 4.5 H6.8 M4.5 2.2 V6.8" stroke="#111" stroke-width="1.3" fill="none"/></svg>
<div class="t" style="left:62.30px;top:336.03px;font-size:7.88px;transform:scaleX(0.9301);color:#151515;">E-Cores (Max)</div>
<div class="t" style="left:185.58px;top:336.03px;font-size:7.88px;transform:scaleX(0.8787);color:#151515;">51.0 °C</div>
<div class="t" style="left:241.48px;top:336.03px;font-size:7.88px;transform:scaleX(0.8787);color:#151515;">27.0 °C</div>
<div class="t" style="left:297.48px;top:336.03px;font-size:7.88px;transform:scaleX(0.8787);color:#151515;">58.0 °C</div>
<div class="a" style="left:29.50px;top:352.27px;width:7.00px;height:0.64px;background:#bcbcbc;"></div>
<svg class="a" style="left:26.40px;top:349.49px" width="6.20" height="6.20" viewBox="0 0 9 9"><rect x="0.6" y="0.6" width="7.8" height="7.8" fill="#fff" stroke="#868686" stroke-width="1.15"/><path d="M2.2 4.5 H6.8" stroke="#111" stroke-width="1.3" fill="none"/></svg>
<svg class="a" style="left:36.10px;top:347.19px" width="10.6" height="10.6" viewBox="0 0 16 16"><path d="M8 0.8 C9.5 4 13 6 13 10.2 C13 13.4 10.8 15.2 8 15.2 C5.2 15.2 3 13.4 3 10.2 C3 8 4.4 6.8 5.2 5.2 C6 6.6 6.4 7 6.8 7 C7 5 7 3 8 0.8 Z" fill="#fff4e2" stroke="#f07c14" stroke-width="1.7"/><path d="M8 9 C9 10.4 10 11 10 12.4 C10 13.6 9.2 14.2 8 14.2 C6.8 14.2 6 13.6 6 12.4 C6 11 7.2 10.4 8 9 Z" fill="#f8a040"/></svg>
<div class="t" style="left:50.10px;top:347.59px;font-size:7.88px;transform:scaleX(0.9308);color:#151515;">Powers</div>
<div class="a" style="left:61.00px;top:357.92px;width:305.60px;height:10.90px;background:#f0f0f0;"></div>
<div class="a" style="left:41.60px;top:363.83px;width:7.70px;height:0.64px;background:#bcbcbc;"></div>
<div class="t" style="left:62.30px;top:359.15px;font-size:7.88px;transform:scaleX(0.9236);color:#151515;">Package</div>
<div class="t" style="left:182.37px;top:359.15px;font-size:7.88px;transform:scaleX(0.8992);color:#151515;">87.23 W</div>
<div class="t" style="left:242.12px;top:359.15px;font-size:7.88px;transform:scaleX(0.9025);color:#151515;">3.06 W</div>
<div class="t" style="left:290.42px;top:359.15px;font-size:7.88px;transform:scaleX(0.8973);color:#151515;">109.35 W</div>
<div class="a" style="left:41.60px;top:375.39px;width:7.70px;height:0.64px;background:#bcbcbc;"></div>
<div class="t" style="left:62.30px;top:370.71px;font-size:7.88px;transform:scaleX(0.9162);color:#151515;">IA Cores</div>
<div class="t" style="left:182.37px;top:370.71px;font-size:7.88px;transform:scaleX(0.8992);color:#151515;">85.05 W</div>
<div class="t" style="left:242.12px;top:370.71px;font-size:7.88px;transform:scaleX(0.9025);color:#151515;">1.70 W</div>
<div class="t" style="left:290.42px;top:370.71px;font-size:7.88px;transform:scaleX(0.8973);color:#151515;">107.21 W</div>
<div class="a" style="left:61.00px;top:381.04px;width:305.60px;height:10.90px;background:#f0f0f0;"></div>
<div class="a" style="left:41.60px;top:386.95px;width:7.70px;height:0.64px;background:#bcbcbc;"></div>
<div class="t" style="left:62.30px;top:382.27px;font-size:7.88px;transform:scaleX(0.9217);color:#151515;">VR Out</div>
<div class="t" style="left:182.37px;top:382.27px;font-size:7.88px;transform:scaleX(0.8992);color:#151515;">98.00 W</div>
<div class="t" style="left:242.12px;top:382.27px;font-size:7.88px;transform:scaleX(0.9025);color:#151515;">1.00 W</div>
<div class="t" style="left:290.42px;top:382.27px;font-size:7.88px;transform:scaleX(0.8973);color:#151515;">105.00 W</div>
<div class="a" style="left:41.60px;top:398.51px;width:7.70px;height:0.64px;background:#bcbcbc;"></div>
<div class="t" style="left:62.30px;top:393.83px;font-size:7.88px;transform:scaleX(0.8822);color:#151515;">VR In</div>
<div class="t" style="left:178.52px;top:393.83px;font-size:7.88px;transform:scaleX(0.8973);color:#151515;">126.00 W</div>
<div class="t" style="left:242.12px;top:393.83px;font-size:7.88px;transform:scaleX(0.9025);color:#151515;">2.00 W</div>
<div class="t" style="left:290.42px;top:393.83px;font-size:7.88px;transform:scaleX(0.8973);color:#151515;">134.00 W</div>
<div class="a" style="left:61.00px;top:404.16px;width:305.60px;height:10.90px;background:#f0f0f0;"></div>
<div class="a" style="left:41.60px;top:410.07px;width:7.70px;height:0.64px;background:#bcbcbc;"></div>
<div class="t" style="left:62.30px;top:405.39px;font-size:7.88px;transform:scaleX(0.9413);color:#151515;">Power Max (PL1)</div>
<div class="t" style="left:174.66px;top:405.39px;font-size:7.88px;transform:scaleX(0.8954);color:#151515;">4095.88 W</div>
<div class="t" style="left:230.56px;top:405.39px;font-size:7.88px;transform:scaleX(0.8954);color:#151515;">4095.88 W</div>
<div class="t" style="left:286.56px;top:405.39px;font-size:7.88px;transform:scaleX(0.8954);color:#151515;">4095.88 W</div>
<div class="a" style="left:41.60px;top:421.63px;width:7.70px;height:0.64px;background:#bcbcbc;"></div>
<div class="t" style="left:62.30px;top:416.95px;font-size:7.88px;transform:scaleX(0.9434);color:#151515;">Short Power Max (PL2)</div>
<div class="t" style="left:174.66px;top:416.95px;font-size:7.88px;transform:scaleX(0.8954);color:#151515;">4095.88 W</div>
<div class="t" style="left:230.56px;top:416.95px;font-size:7.88px;transform:scaleX(0.8954);color:#151515;">4095.88 W</div>
<div class="t" style="left:286.56px;top:416.95px;font-size:7.88px;transform:scaleX(0.8954);color:#151515;">4095.88 W</div>
<div class="a" style="left:29.50px;top:433.19px;width:7.00px;height:0.64px;background:#bcbcbc;"></div>
<svg class="a" style="left:26.40px;top:430.41px" width="6.20" height="6.20" viewBox="0 0 9 9"><rect x="0.6" y="0.6" width="7.8" height="7.8" fill="#fff" stroke="#868686" stroke-width="1.15"/><path d="M2.2 4.5 H6.8 M4.5 2.2 V6.8" stroke="#111" stroke-width="1.3" fill="none"/></svg>
<svg class="a" style="left:36.10px;top:428.11px" width="10.6" height="10.6" viewBox="0 0 16 16"><path d="M0.5 11 L6.5 4.5 L8.5 8 L15.5 3 L9.5 11.5 L7.5 8 Z" fill="#6a96e8" stroke="#2a4a98" stroke-width="1.2"/></svg>
<div class="t" style="left:50.10px;top:428.51px;font-size:7.88px;transform:scaleX(0.9375);color:#151515;">Currents</div>
<div class="a" style="left:29.50px;top:444.75px;width:7.00px;height:0.64px;background:#bcbcbc;"></div>
<svg class="a" style="left:26.40px;top:441.97px" width="6.20" height="6.20" viewBox="0 0 9 9"><rect x="0.6" y="0.6" width="7.8" height="7.8" fill="#fff" stroke="#868686" stroke-width="1.15"/><path d="M2.2 4.5 H6.8 M4.5 2.2 V6.8" stroke="#111" stroke-width="1.3" fill="none"/></svg>
<svg class="a" style="left:36.10px;top:439.67px" width="10.6" height="10.6" viewBox="0 0 16 16"><rect x="0.5" y="3" width="15" height="9.5" fill="#121a12"/><path d="M2 10 L5 7 L7 9 L10 5.5 L14 8" stroke="#28c828" stroke-width="1.3" fill="none"/></svg>
<div class="t" style="left:50.10px;top:440.07px;font-size:7.88px;color:#151515;">Utilization</div>
<div class="a" style="left:29.50px;top:456.31px;width:7.00px;height:0.64px;background:#bcbcbc;"></div>
<svg class="a" style="left:26.40px;top:453.53px" width="6.20" height="6.20" viewBox="0 0 9 9"><rect x="0.6" y="0.6" width="7.8" height="7.8" fill="#fff" stroke="#868686" stroke-width="1.15"/><path d="M2.2 4.5 H6.8 M4.5 2.2 V6.8" stroke="#111" stroke-width="1.3" fill="none"/></svg>
<svg class="a" style="left:36.10px;top:451.23px" width="10.6" height="10.6" viewBox="0 0 16 16"><path d="M1.5 13 V4 M4.5 13 V6 M7.5 13 V3 M10.5 13 V5 M13.5 13 V4" stroke="#5a6eb0" stroke-width="2"/><path d="M0.5 13.5 H15" stroke="#2a3a78" stroke-width="1"/></svg>
<div class="t" style="left:50.10px;top:451.63px;font-size:7.88px;transform:scaleX(0.9255);color:#151515;">Clocks</div>
<div class="a" style="left:36.60px;top:462.31px;width:330.00px;height:10.30px;background:#d3e5f4;"></div>
<div class="a" style="left:17.30px;top:467.87px;width:7.00px;height:0.64px;background:#bcbcbc;"></div>
<svg class="a" style="left:14.20px;top:465.09px" width="6.20" height="6.20" viewBox="0 0 9 9"><rect x="0.6" y="0.6" width="7.8" height="7.8" fill="#fff" stroke="#868686" stroke-width="1.15"/><path d="M2.2 4.5 H6.8" stroke="#111" stroke-width="1.3" fill="none"/></svg>
<svg class="a" style="left:23.90px;top:462.79px" width="10.6" height="10.6" viewBox="0 0 16 16"><rect x="0.3" y="5" width="15.4" height="5.6" fill="#2e7a2e"/><rect x="1.5" y="6" width="2.6" height="2.8" fill="#1a1a1a"/><rect x="5" y="6" width="2.6" height="2.8" fill="#1a1a1a"/><rect x="8.5" y="6" width="2.6" height="2.8" fill="#1a1a1a"/><rect x="12" y="6" width="2.6" height="2.8" fill="#1a1a1a"/><rect x="0.3" y="10.2" width="15.4" height="1.2" fill="#c8b040"/></svg>
<div class="t" style="left:37.90px;top:463.19px;font-size:7.88px;transform:scaleX(0.9449);color:#151515;">A-Data Technology AX5U6000C...</div>
<div class="a" style="left:29.50px;top:479.43px;width:7.00px;height:0.64px;background:#bcbcbc;"></div>
<svg class="a" style="left:26.40px;top:476.65px" width="6.20" height="6.20" viewBox="0 0 9 9"><rect x="0.6" y="0.6" width="7.8" height="7.8" fill="#fff" stroke="#868686" stroke-width="1.15"/><path d="M2.2 4.5 H6.8" stroke="#111" stroke-width="1.3" fill="none"/></svg>
<svg class="a" style="left:36.10px;top:474.35px" width="10.6" height="10.6" viewBox="0 0 16 16"><path d="M0.5 11 L6.5 4.5 L8.5 8 L15.5 3 L9.5 11.5 L7.5 8 Z" fill="#e8b000" stroke="#8a6a00" stroke-width="1.2"/></svg>
<div class="t" style="left:50.10px;top:474.75px;font-size:7.88px;transform:scaleX(0.9583);color:#151515;">Voltages</div>
<div class="a" style="left:61.00px;top:485.08px;width:305.60px;height:10.90px;background:#f0f0f0;"></div>
<div class="a" style="left:41.60px;top:490.99px;width:7.70px;height:0.64px;background:#bcbcbc;"></div>
<div class="t" style="left:62.30px;top:486.31px;font-size:7.88px;transform:scaleX(0.9544);color:#151515;">VDD (Node A)</div>
<div class="t" style="left:184.94px;top:486.31px;font-size:7.88px;transform:scaleX(0.8770);color:#151515;">1.350 V</div>
<div class="t" style="left:240.84px;top:486.31px;font-size:7.88px;transform:scaleX(0.8770);color:#151515;">1.350 V</div>
<div class="t" style="left:296.84px;top:486.31px;font-size:7.88px;transform:scaleX(0.8770);color:#151515;">1.365 V</div>
<div class="a" style="left:41.60px;top:502.55px;width:7.70px;height:0.64px;background:#bcbcbc;"></div>
<div class="t" style="left:62.30px;top:497.87px;font-size:7.88px;transform:scaleX(0.9333);color:#151515;">VDD (Node B)</div>
<div class="t" style="left:184.94px;top:497.87px;font-size:7.88px;transform:scaleX(0.8770);color:#151515;">1.365 V</div>
<div class="t" style="left:240.84px;top:497.87px;font-size:7.88px;transform:scaleX(0.8770);color:#151515;">1.365 V</div>
<div class="t" style="left:296.84px;top:497.87px;font-size:7.88px;transform:scaleX(0.8770);color:#151515;">1.380 V</div>
<div class="a" style="left:61.00px;top:508.20px;width:305.60px;height:10.90px;background:#f0f0f0;"></div>
<div class="a" style="left:41.60px;top:514.11px;width:7.70px;height:0.64px;background:#bcbcbc;"></div>
<div class="t" style="left:62.30px;top:509.43px;font-size:7.88px;transform:scaleX(0.9046);color:#151515;">VDDQ</div>
<div class="t" style="left:184.94px;top:509.43px;font-size:7.88px;transform:scaleX(0.8770);color:#151515;">1.365 V</div>
<div class="t" style="left:240.84px;top:509.43px;font-size:7.88px;transform:scaleX(0.8770);color:#151515;">1.365 V</div>
<div class="t" style="left:296.84px;top:509.43px;font-size:7.88px;transform:scaleX(0.8770);color:#151515;">1.380 V</div>
<div class="a" style="left:41.60px;top:525.67px;width:7.70px;height:0.64px;background:#bcbcbc;"></div>
<div class="t" style="left:62.30px;top:520.99px;font-size:7.88px;transform:scaleX(0.8820);color:#151515;">VDDP</div>
<div class="t" style="left:184.94px;top:520.99px;font-size:7.88px;transform:scaleX(0.8770);color:#151515;">1.830 V</div>
<div class="t" style="left:240.84px;top:520.99px;font-size:7.88px;transform:scaleX(0.8770);color:#151515;">1.815 V</div>
<div class="t" style="left:296.84px;top:520.99px;font-size:7.88px;transform:scaleX(0.8770);color:#151515;">1.830 V</div>
<div class="a" style="left:61.00px;top:531.32px;width:305.60px;height:10.90px;background:#f0f0f0;"></div>
<div class="a" style="left:41.60px;top:537.23px;width:7.70px;height:0.64px;background:#bcbcbc;"></div>
<div class="t" style="left:62.30px;top:532.55px;font-size:7.88px;transform:scaleX(0.8820);color:#151515;">VOUT 1.8V</div>
<div class="t" style="left:184.94px;top:532.55px;font-size:7.88px;transform:scaleX(0.8770);color:#151515;">1.800 V</div>
<div class="t" style="left:240.84px;top:532.55px;font-size:7.88px;transform:scaleX(0.8770);color:#151515;">1.800 V</div>
<div class="t" style="left:296.84px;top:532.55px;font-size:7.88px;transform:scaleX(0.8770);color:#151515;">1.800 V</div>
<div class="a" style="left:41.60px;top:548.79px;width:7.70px;height:0.64px;background:#bcbcbc;"></div>
<div class="t" style="left:62.30px;top:544.11px;font-size:7.88px;transform:scaleX(0.8820);color:#151515;">VOUT 1.0V</div>
<div class="t" style="left:184.94px;top:544.11px;font-size:7.88px;transform:scaleX(0.8770);color:#151515;">1.005 V</div>
<div class="t" style="left:240.84px;top:544.11px;font-size:7.88px;transform:scaleX(0.8770);color:#151515;">1.005 V</div>
<div class="t" style="left:296.84px;top:544.11px;font-size:7.88px;transform:scaleX(0.8770);color:#151515;">1.005 V</div>
<div class="a" style="left:29.50px;top:560.35px;width:7.00px;height:0.64px;background:#bcbcbc;"></div>
<svg class="a" style="left:26.40px;top:557.57px" width="6.20" height="6.20" viewBox="0 0 9 9"><rect x="0.6" y="0.6" width="7.8" height="7.8" fill="#fff" stroke="#868686" stroke-width="1.15"/><path d="M2.2 4.5 H6.8" stroke="#111" stroke-width="1.3" fill="none"/></svg>
<svg class="a" style="left:36.10px;top:555.27px" width="10.6" height="10.6" viewBox="0 0 16 16"><path d="M5 10.5 L13.6 1.8" stroke="#bdbdbd" stroke-width="3" stroke-linecap="round"/><path d="M4.5 11 L11 4.5" stroke="#e00c1c" stroke-width="2.4" stroke-linecap="round"/><circle cx="4.4" cy="11.2" r="3.9" fill="#e00c1c"/><circle cx="3.4" cy="10.2" r="1.1" fill="#ff8a8a"/></svg>
<div class="t" style="left:50.10px;top:555.67px;font-size:7.88px;transform:scaleX(0.9487);color:#151515;">Temperatures</div>
<div class="a" style="left:61.00px;top:566.00px;width:305.60px;height:10.90px;background:#f0f0f0;"></div>
<div class="a" style="left:41.60px;top:571.91px;width:7.70px;height:0.64px;background:#bcbcbc;"></div>
<div class="t" style="left:62.30px;top:567.23px;font-size:7.88px;transform:scaleX(0.9042);color:#151515;">Core</div>
<div class="t" style="left:185.58px;top:567.23px;font-size:7.88px;transform:scaleX(0.8787);color:#151515;">58.0 °C</div>
<div class="t" style="left:241.48px;top:567.23px;font-size:7.88px;transform:scaleX(0.8787);color:#151515;">36.5 °C</div>
<div class="t" style="left:297.48px;top:567.23px;font-size:7.88px;transform:scaleX(0.8787);color:#151515;">58.0 °C</div>
<div class="a" style="left:29.50px;top:583.47px;width:7.00px;height:0.64px;background:#bcbcbc;"></div>
<svg class="a" style="left:26.40px;top:580.69px" width="6.20" height="6.20" viewBox="0 0 9 9"><rect x="0.6" y="0.6" width="7.8" height="7.8" fill="#fff" stroke="#868686" stroke-width="1.15"/><path d="M2.2 4.5 H6.8" stroke="#111" stroke-width="1.3" fill="none"/></svg>
<svg class="a" style="left:36.10px;top:578.39px" width="10.6" height="10.6" viewBox="0 0 16 16"><path d="M8 0.8 C9.5 4 13 6 13 10.2 C13 13.4 10.8 15.2 8 15.2 C5.2 15.2 3 13.4 3 10.2 C3 8 4.4 6.8 5.2 5.2 C6 6.6 6.4 7 6.8 7 C7 5 7 3 8 0.8 Z" fill="#fff4e2" stroke="#f07c14" stroke-width="1.7"/><path d="M8 9 C9 10.4 10 11 10 12.4 C10 13.6 9.2 14.2 8 14.2 C6.8 14.2 6 13.6 6 12.4 C6 11 7.2 10.4 8 9 Z" fill="#f8a040"/></svg>
<div class="t" style="left:50.10px;top:578.79px;font-size:7.88px;transform:scaleX(0.9308);color:#151515;">Powers</div>
<div class="a" style="left:61.00px;top:589.12px;width:305.60px;height:10.90px;background:#f0f0f0;"></div>
<div class="a" style="left:41.60px;top:595.03px;width:7.70px;height:0.64px;background:#bcbcbc;"></div>
<div class="t" style="left:62.30px;top:590.35px;font-size:7.88px;transform:scaleX(0.9896);color:#151515;">Total Output Power</div>
<div class="t" style="left:186.22px;top:590.35px;font-size:7.88px;transform:scaleX(0.9025);color:#151515;">3.13 W</div>
<div class="t" style="left:242.12px;top:590.35px;font-size:7.88px;transform:scaleX(0.9025);color:#151515;">0.00 W</div>
<div class="t" style="left:298.12px;top:590.35px;font-size:7.88px;transform:scaleX(0.9025);color:#151515;">4.25 W</div>
<div class="a" style="left:36.60px;top:601.03px;width:330.00px;height:10.30px;background:#d3e5f4;"></div>
<div class="a" style="left:17.30px;top:606.59px;width:7.00px;height:0.64px;background:#bcbcbc;"></div>
<svg class="a" style="left:14.20px;top:603.81px" width="6.20" height="6.20" viewBox="0 0 9 9"><rect x="0.6" y="0.6" width="7.8" height="7.8" fill="#fff" stroke="#868686" stroke-width="1.15"/><path d="M2.2 4.5 H6.8" stroke="#111" stroke-width="1.3" fill="none"/></svg>
<svg class="a" style="left:23.90px;top:601.51px" width="10.6" height="10.6" viewBox="0 0 16 16"><rect x="0.3" y="5" width="15.4" height="5.6" fill="#2e7a2e"/><rect x="1.5" y="6" width="2.6" height="2.8" fill="#1a1a1a"/><rect x="5" y="6" width="2.6" height="2.8" fill="#1a1a1a"/><rect x="8.5" y="6" width="2.6" height="2.8" fill="#1a1a1a"/><rect x="12" y="6" width="2.6" height="2.8" fill="#1a1a1a"/><rect x="0.3" y="10.2" width="15.4" height="1.2" fill="#c8b040"/></svg>
<div class="t" style="left:37.90px;top:601.91px;font-size:7.88px;transform:scaleX(0.9449);color:#151515;">A-Data Technology AX5U6000C...</div>
<div class="a" style="left:29.50px;top:618.15px;width:7.00px;height:0.64px;background:#bcbcbc;"></div>
<svg class="a" style="left:26.40px;top:615.37px" width="6.20" height="6.20" viewBox="0 0 9 9"><rect x="0.6" y="0.6" width="7.8" height="7.8" fill="#fff" stroke="#868686" stroke-width="1.15"/><path d="M2.2 4.5 H6.8" stroke="#111" stroke-width="1.3" fill="none"/></svg>
<svg class="a" style="left:36.10px;top:613.07px" width="10.6" height="10.6" viewBox="0 0 16 16"><path d="M0.5 11 L6.5 4.5 L8.5 8 L15.5 3 L9.5 11.5 L7.5 8 Z" fill="#e8b000" stroke="#8a6a00" stroke-width="1.2"/></svg>
<div class="t" style="left:50.10px;top:613.47px;font-size:7.88px;transform:scaleX(0.9583);color:#151515;">Voltages</div>
<div class="a" style="left:61.00px;top:623.80px;width:305.60px;height:10.90px;background:#f0f0f0;"></div>
<div class="a" style="left:41.60px;top:629.71px;width:7.70px;height:0.64px;background:#bcbcbc;"></div>
<div class="t" style="left:62.30px;top:625.03px;font-size:7.88px;transform:scaleX(0.9544);color:#151515;">VDD (Node A)</div>
<div class="t" style="left:184.94px;top:625.03px;font-size:7.88px;transform:scaleX(0.8770);color:#151515;">1.350 V</div>
<div class="t" style="left:240.84px;top:625.03px;font-size:7.88px;transform:scaleX(0.8770);color:#151515;">1.350 V</div>
<div class="t" style="left:296.84px;top:625.03px;font-size:7.88px;transform:scaleX(0.8770);color:#151515;">1.365 V</div>
<div class="a" style="left:41.60px;top:641.27px;width:7.70px;height:0.64px;background:#bcbcbc;"></div>
<div class="t" style="left:62.30px;top:636.59px;font-size:7.88px;transform:scaleX(0.9333);color:#151515;">VDD (Node B)</div>
<div class="t" style="left:184.94px;top:636.59px;font-size:7.88px;transform:scaleX(0.8770);color:#151515;">1.365 V</div>
<div class="t" style="left:240.84px;top:636.59px;font-size:7.88px;transform:scaleX(0.8770);color:#151515;">1.350 V</div>
<div class="t" style="left:296.84px;top:636.59px;font-size:7.88px;transform:scaleX(0.8770);color:#151515;">1.365 V</div>
<div class="a" style="left:61.00px;top:646.92px;width:305.60px;height:10.90px;background:#f0f0f0;"></div>
<div class="a" style="left:41.60px;top:652.83px;width:7.70px;height:0.64px;background:#bcbcbc;"></div>
<div class="t" style="left:62.30px;top:648.15px;font-size:7.88px;transform:scaleX(0.9046);color:#151515;">VDDQ</div>
<div class="t" style="left:184.94px;top:648.15px;font-size:7.88px;transform:scaleX(0.8770);color:#151515;">1.365 V</div>
<div class="t" style="left:240.84px;top:648.15px;font-size:7.88px;transform:scaleX(0.8770);color:#151515;">1.350 V</div>
<div class="t" style="left:296.84px;top:648.15px;font-size:7.88px;transform:scaleX(0.8770);color:#151515;">1.380 V</div>
<div class="a" style="left:41.60px;top:664.39px;width:7.70px;height:0.64px;background:#bcbcbc;"></div>
<div class="t" style="left:62.30px;top:659.71px;font-size:7.88px;transform:scaleX(0.8820);color:#151515;">VDDP</div>
<div class="t" style="left:184.94px;top:659.71px;font-size:7.88px;transform:scaleX(0.8770);color:#151515;">1.815 V</div>
<div class="t" style="left:240.84px;top:659.71px;font-size:7.88px;transform:scaleX(0.8770);color:#151515;">1.815 V</div>
<div class="t" style="left:296.84px;top:659.71px;font-size:7.88px;transform:scaleX(0.8770);color:#151515;">1.815 V</div>
<div class="a" style="left:61.00px;top:670.04px;width:305.60px;height:10.90px;background:#f0f0f0;"></div>
<div class="a" style="left:41.60px;top:675.95px;width:7.70px;height:0.64px;background:#bcbcbc;"></div>
<div class="t" style="left:62.30px;top:671.27px;font-size:7.88px;transform:scaleX(0.8820);color:#151515;">VOUT 1.8V</div>
<div class="t" style="left:184.94px;top:671.27px;font-size:7.88px;transform:scaleX(0.8770);color:#151515;">1.800 V</div>
<div class="t" style="left:240.84px;top:671.27px;font-size:7.88px;transform:scaleX(0.8770);color:#151515;">1.800 V</div>
<div class="t" style="left:296.84px;top:671.27px;font-size:7.88px;transform:scaleX(0.8770);color:#151515;">1.800 V</div>
<div class="a" style="left:41.60px;top:687.51px;width:7.70px;height:0.64px;background:#bcbcbc;"></div>
<div class="t" style="left:62.30px;top:682.83px;font-size:7.88px;transform:scaleX(0.8820);color:#151515;">VOUT 1.0V</div>
<div class="t" style="left:184.94px;top:682.83px;font-size:7.88px;transform:scaleX(0.8770);color:#151515;">1.005 V</div>
<div class="t" style="left:240.84px;top:682.83px;font-size:7.88px;transform:scaleX(0.8770);color:#151515;">1.005 V</div>
<div class="t" style="left:296.84px;top:682.83px;font-size:7.88px;transform:scaleX(0.8770);color:#151515;">1.005 V</div>
<div class="a" style="left:29.50px;top:699.07px;width:7.00px;height:0.64px;background:#bcbcbc;"></div>
<svg class="a" style="left:26.40px;top:696.29px" width="6.20" height="6.20" viewBox="0 0 9 9"><rect x="0.6" y="0.6" width="7.8" height="7.8" fill="#fff" stroke="#868686" stroke-width="1.15"/><path d="M2.2 4.5 H6.8" stroke="#111" stroke-width="1.3" fill="none"/></svg>
<svg class="a" style="left:36.10px;top:693.99px" width="10.6" height="10.6" viewBox="0 0 16 16"><path d="M5 10.5 L13.6 1.8" stroke="#bdbdbd" stroke-width="3" stroke-linecap="round"/><path d="M4.5 11 L11 4.5" stroke="#e00c1c" stroke-width="2.4" stroke-linecap="round"/><circle cx="4.4" cy="11.2" r="3.9" fill="#e00c1c"/><circle cx="3.4" cy="10.2" r="1.1" fill="#ff8a8a"/></svg>
<div class="t" style="left:50.10px;top:694.39px;font-size:7.88px;transform:scaleX(0.9487);color:#151515;">Temperatures</div>
<div class="a" style="left:61.00px;top:704.72px;width:305.60px;height:10.90px;background:#f0f0f0;"></div>
<div class="a" style="left:41.60px;top:710.63px;width:7.70px;height:0.64px;background:#bcbcbc;"></div>
<div class="t" style="left:62.30px;top:705.95px;font-size:7.88px;transform:scaleX(0.9042);color:#151515;">Core</div>
<div class="t" style="left:185.58px;top:705.95px;font-size:7.88px;transform:scaleX(0.8787);color:#151515;">57.8 °C</div>
<div class="t" style="left:241.48px;top:705.95px;font-size:7.88px;transform:scaleX(0.8787);color:#151515;">36.5 °C</div>
<div class="t" style="left:297.48px;top:705.95px;font-size:7.88px;transform:scaleX(0.8787);color:#151515;">57.8 °C</div>
<div class="a" style="left:0.00px;top:712.30px;width:378.50px;height:10.00px;background:#f0f0f0;"></div>
<div class="a" style="left:302.20px;top:713.00px;width:0.80px;height:9.00px;background:#c4c4c4;"></div>
<div class="a" style="left:321.60px;top:713.00px;width:0.80px;height:9.00px;background:#c4c4c4;"></div>
<div class="a" style="left:344.20px;top:713.00px;width:0.80px;height:9.00px;background:#c4c4c4;"></div>
<div class="a" style="left:366.20px;top:713.00px;width:0.80px;height:9.00px;background:#c4c4c4;"></div>
<div class="t" style="left:-0.30px;top:714.60px;font-size:7.77px;transform:scaleX(0.9153);">Ready</div>
<div class="t" style="left:324.00px;top:714.50px;font-size:7.77px;transform:scaleX(1.0167);">NUM</div>
<svg class="a" style="left:369px;top:714px" width="9" height="8" viewBox="0 0 9 8"><path d="M9 0 L1 8 M9 3 L4 8 M9 6 L7 8" stroke="#9a9a9a" stroke-width="1"/></svg>
<div class="a" style="left:379.20px;top:343.20px;width:500.00px;height:380.00px;background:#f0f0f0;border-radius:3px 0 0 0;box-shadow:0 7px 11px rgba(0,0,0,.33);border-left:0.75px solid #6a6a6a;border-top:0.6px solid #9a9a9a;"></div>
<div class="a" style="left:380.00px;top:343.80px;width:500.00px;height:19.00px;background:#f3f3f3;border-radius:3px 0 0 0;"></div>
<svg class="a" style="left:385.60px;top:347.60px" width="9.60" height="10.40" viewBox="0 0 21 20.5"><path d="M10 1 C11 5 15 7 15.5 11.5 C17 10 17.5 8 17.2 6 C19.5 9 20 13 18 16 C16.5 18.6 13.5 19.6 10.5 19.4 C6.5 19.2 3.2 16.8 3 12.8 C2.8 10.6 3.6 8.8 4.4 7.4 C4.8 9 5.6 10.4 6.8 11 C6.4 7.6 7.6 3.6 10 1 Z" fill="#f07a10"/><path d="M10.5 8 C11.5 10.5 14 12 14 15 C14 17.5 12.2 19 10.2 19 C8.2 19 6.4 17.6 6.4 15.4 C6.4 13.8 7.4 12.8 7.8 11.6 C8.4 12.4 8.8 12.8 9.4 12.8 C9.6 11.2 9.8 9.6 10.5 8 Z" fill="#ffd83a"/></svg>
<div class="t g" style="left:399.00px;top:348.60px;font-size:7.88px;transform:scaleX(0.9604);color:#8c8c8c;">System Stability Test - AIDA64</div>
<svg class="a" style="left:795px;top:343.6px" width="82" height="19" viewBox="0 0 82 19" fill="none" stroke="#8a8a8a" stroke-width="0.75"><path d="M6.8 9.1 H13.6"/><rect x="35.4" y="5.8" width="6.4" height="6.4" rx="1"/><path d="M65.1 5.7 L71.7 12.3 M71.7 5.7 L65.1 12.3"/></svg>
<svg class="a" style="left:390.00px;top:372.30px" width="10.40" height="10.40" viewBox="0 0 16 16"><rect x="1" y="1" width="14" height="14" fill="#2c5a3a"/><rect x="3" y="3" width="10" height="10" fill="#e8e8e0"/></svg>
<svg class="a" style="left:405.2px;top:374.50px" width="8.3" height="8.3" viewBox="0 0 13 13"><rect width="13" height="13" rx="2.6" fill="#0a64b8"/><path d="M3.2 6.8 L5.6 9.2 L10 4.2" stroke="#fff" stroke-width="1.3" fill="none"/></svg>
<div class="t" style="left:415.60px;top:374.30px;font-size:7.93px;transform:scaleX(0.8553);color:#111;">Stress CPU</div>
<svg class="a" style="left:390.00px;top:385.17px" width="10.40" height="10.40" viewBox="0 0 16 16"><rect x="1" y="1" width="14" height="14" fill="#2c5a3a"/><rect x="3" y="3" width="10" height="10" fill="#d8dcd0"/><path d="M5 5 h2 v2 h-2 z M9 9 h2 v2 h-2 z M11 4.5 L5 11.5" stroke="#222" stroke-width="1" fill="#222"/></svg>
<svg class="a" style="left:405.2px;top:387.37px" width="8.3" height="8.3" viewBox="0 0 13 13"><rect width="13" height="13" rx="2.6" fill="#0a64b8"/><path d="M3.2 6.8 L5.6 9.2 L10 4.2" stroke="#fff" stroke-width="1.3" fill="none"/></svg>
<div class="t" style="left:415.60px;top:387.17px;font-size:7.93px;transform:scaleX(0.8579);color:#111;">Stress FPU</div>
<svg class="a" style="left:390.00px;top:398.04px" width="10.40" height="10.40" viewBox="0 0 16 16"><rect x="2.5" y="1" width="11" height="14" fill="#4a4a4a"/><path d="M1 3 h14 M1 6 h14 M1 9 h14 M1 12 h14" stroke="#222" stroke-width="1.2"/><rect x="5" y="2" width="6" height="12" fill="#6a6a6a"/></svg>
<svg class="a" style="left:405.2px;top:400.24px" width="8.3" height="8.3" viewBox="0 0 13 13"><rect width="13" height="13" rx="2.6" fill="#0a64b8"/><path d="M3.2 6.8 L5.6 9.2 L10 4.2" stroke="#fff" stroke-width="1.3" fill="none"/></svg>
<div class="t" style="left:415.60px;top:400.04px;font-size:7.93px;transform:scaleX(0.8993);color:#111;">Stress cache</div>
<svg class="a" style="left:390.00px;top:410.91px" width="10.40" height="10.40" viewBox="0 0 16 16"><rect x="0.5" y="4" width="15" height="7" fill="#2e7a2e"/><path d="M2 4 v6 M4.5 4 v6 M7 4 v6 M9.5 4 v6 M12 4 v6 M14 4 v6" stroke="#154a15" stroke-width="1"/><rect x="0.5" y="10.5" width="15" height="1.6" fill="#8ab08a"/></svg>
<svg class="a" style="left:405.2px;top:413.11px" width="8.3" height="8.3" viewBox="0 0 13 13"><rect width="13" height="13" rx="2.6" fill="#0a64b8"/><path d="M3.2 6.8 L5.6 9.2 L10 4.2" stroke="#fff" stroke-width="1.3" fill="none"/></svg>
<div class="t" style="left:415.60px;top:412.91px;font-size:7.93px;transform:scaleX(0.9187);color:#111;">Stress system memory</div>
<svg class="a" style="left:390.00px;top:423.78px" width="10.40" height="10.40" viewBox="0 0 16 16"><rect x="1" y="8" width="14" height="4.6" rx="0.8" fill="#3a3a3a"/><rect x="1" y="7" width="14" height="2" fill="#b8b8b8"/></svg>
<div class="a" style="left:405.20px;top:425.98px;width:8.30px;height:8.30px;background:#fdfdfd;border:0.7px solid #7a7a7a;border-radius:1.8px;"></div>
<div class="t" style="left:415.60px;top:425.78px;font-size:7.93px;transform:scaleX(0.9148);color:#111;">Stress local disks</div>
<svg class="a" style="left:390.00px;top:436.65px" width="10.40" height="10.40" viewBox="0 0 16 16"><rect x="0.5" y="1.5" width="14" height="10" fill="#2a8ad8"/><rect x="1.5" y="2.5" width="12" height="8" fill="#58b8f8"/><rect x="7" y="8" width="8.5" height="6" fill="#2e8a4a"/><rect x="8" y="14" width="7" height="1.5" fill="#e8a020"/></svg>
<svg class="a" style="left:405.2px;top:438.85px" width="8.3" height="8.3" viewBox="0 0 13 13"><rect width="13" height="13" rx="2.6" fill="#0a64b8"/><path d="M3.2 6.8 L5.6 9.2 L10 4.2" stroke="#fff" stroke-width="1.3" fill="none"/></svg>
<div class="t" style="left:415.60px;top:438.65px;font-size:7.93px;transform:scaleX(0.8694);color:#111;">Stress GPU(s)</div>
<div class="a" style="left:506.60px;top:373.20px;width:284.20px;height:73.20px;background:#ffffff;border:0.8px solid #868a94;"></div>
<div class="a" style="left:507.60px;top:401.70px;width:275.80px;height:12.20px;background:#f0f0f0;"></div>
<div class="a" style="left:604.20px;top:374.00px;width:0.60px;height:71.60px;background:#e6e6e6;"></div>
<div class="a" style="left:783.30px;top:374.00px;width:0.60px;height:71.60px;background:#e6e6e6;"></div>
<div class="a" style="left:507.60px;top:425.80px;width:275.80px;height:0.60px;background:#ececec;"></div>
<div class="a" style="left:507.60px;top:438.30px;width:275.80px;height:0.60px;background:#ececec;"></div>
<div class="t" style="left:511.80px;top:377.40px;font-size:7.93px;transform:scaleX(0.9529);color:#111;">Date / Time</div>
<div class="t" style="left:608.20px;top:377.40px;font-size:7.93px;transform:scaleX(0.9166);color:#111;">Status</div>
<div class="t" style="left:511.80px;top:391.50px;font-size:7.77px;transform:scaleX(0.9069);color:#111;">28.08.2025 11:11:31</div>
<div class="t" style="left:608.20px;top:391.50px;font-size:7.77px;transform:scaleX(0.9614);color:#111;">Stability Test: Started</div>
<div class="t" style="left:511.80px;top:403.70px;font-size:7.77px;transform:scaleX(0.9069);color:#111;">28.08.2025 11:11:32</div>
<div class="t" style="left:608.20px;top:403.70px;font-size:7.77px;transform:scaleX(0.9156);color:#111;">GPU1: Started</div>
<div class="a" style="left:391.40px;top:455.20px;width:54.80px;height:16.00px;background:#fbfbfb;border:0.6px solid #dedede;border-bottom:none;"></div>
<div class="t" style="left:395.40px;top:457.40px;font-size:7.93px;transform:scaleX(0.9432);color:#111;">Temperatures</div>
<div class="a" style="left:446.80px;top:457.00px;width:50.40px;height:14.00px;background:#f4f4f4;border:0.6px solid #e6e6e6;border-bottom:none;"></div>
<div class="t" style="left:449.56px;top:458.40px;font-size:7.93px;transform:scaleX(0.9373);color:#111;">Cooling Fans</div>
<div class="a" style="left:497.80px;top:457.00px;width:35.40px;height:14.00px;background:#f4f4f4;border:0.6px solid #e6e6e6;border-bottom:none;"></div>
<div class="t" style="left:500.45px;top:458.40px;font-size:7.93px;transform:scaleX(0.9524);color:#111;">Voltages</div>
<div class="a" style="left:533.80px;top:457.00px;width:31.40px;height:14.00px;background:#f4f4f4;border:0.6px solid #e6e6e6;border-bottom:none;"></div>
<div class="t" style="left:536.70px;top:458.40px;font-size:7.93px;transform:scaleX(0.9253);color:#111;">Powers</div>
<div class="a" style="left:565.80px;top:457.00px;width:30.40px;height:14.00px;background:#f4f4f4;border:0.6px solid #e6e6e6;border-bottom:none;"></div>
<div class="t" style="left:569.48px;top:458.40px;font-size:7.93px;transform:scaleX(0.9200);color:#111;">Clocks</div>
<div class="a" style="left:596.80px;top:457.00px;width:30.40px;height:14.00px;background:#f4f4f4;border:0.6px solid #e6e6e6;border-bottom:none;"></div>
<div class="t" style="left:599.20px;top:458.40px;font-size:7.93px;transform:scaleX(0.9910);color:#111;">Unified</div>
<div class="a" style="left:627.80px;top:457.00px;width:36.00px;height:14.00px;background:#f4f4f4;border:0.6px solid #e6e6e6;border-bottom:none;"></div>
<div class="t" style="left:630.43px;top:458.40px;font-size:7.93px;transform:scaleX(0.9337);color:#111;">Statistics</div>
<div class="a" style="left:391.30px;top:470.40px;width:475.30px;height:194.60px;background:#ffffff;"></div>
<div class="a" style="left:392.30px;top:471.30px;width:473.30px;height:96.00px;background:#000000;"></div>
<div class="a" style="left:392.30px;top:570.50px;width:473.30px;height:93.50px;background:#000000;"></div>
<svg class="a" style="left:0;top:0" width="877" height="722" viewBox="0 0 877 722">
<path d="M426.15 491.05 V549.20 M432.58 491.05 V549.20 M439.00 491.05 V549.20 M445.43 491.05 V549.20 M451.86 491.05 V549.20 M458.28 491.05 V549.20 M464.71 491.05 V549.20 M471.14 491.05 V549.20 M477.56 491.05 V549.20 M483.99 491.05 V549.20 M490.41 491.05 V549.20 M496.84 491.05 V549.20 M503.27 491.05 V549.20 M509.69 491.05 V549.20 M516.12 491.05 V549.20 M522.55 491.05 V549.20 M528.97 491.05 V549.20 M535.40 491.05 V549.20 M541.83 491.05 V549.20 M548.25 491.05 V549.20 M554.68 491.05 V549.20 M561.11 491.05 V549.20 M567.53 491.05 V549.20 M573.96 491.05 V549.20 M580.39 491.05 V549.20 M586.81 491.05 V549.20 M593.24 491.05 V549.20 M599.67 491.05 V549.20 M606.09 491.05 V549.20 M612.52 491.05 V549.20 M618.94 491.05 V549.20 M625.37 491.05 V549.20 M631.80 491.05 V549.20 M638.22 491.05 V549.20 M644.65 491.05 V549.20 M651.08 491.05 V549.20 M657.50 491.05 V549.20 M663.93 491.05 V549.20 M670.36 491.05 V549.20 M676.78 491.05 V549.20 M683.21 491.05 V549.20 M689.64 491.05 V549.20 M696.06 491.05 V549.20 M702.49 491.05 V549.20 M708.92 491.05 V549.20 M715.34 491.05 V549.20 M721.77 491.05 V549.20 M728.20 491.05 V549.20 M734.62 491.05 V549.20 M741.05 491.05 V549.20 M747.47 491.05 V549.20 M753.90 491.05 V549.20 M760.33 491.05 V549.20 M766.75 491.05 V549.20 M773.18 491.05 V549.20 M779.61 491.05 V549.20 M786.03 491.05 V549.20 M792.46 491.05 V549.20 M798.89 491.05 V549.20 M805.31 491.05 V549.20 M811.74 491.05 V549.20 M818.17 491.05 V549.20 M824.59 491.05 V549.20 M831.02 491.05 V549.20 M425.30 491.35 H833.10 M425.30 497.09 H833.10 M425.30 502.82 H833.10 M425.30 508.56 H833.10 M425.30 514.29 H833.10 M425.30 520.02 H833.10 M425.30 525.76 H833.10 M425.30 531.50 H833.10 M425.30 537.23 H833.10 M425.30 542.97 H833.10 M425.30 548.70 H833.10" stroke="#008000" stroke-width="0.7" fill="none"/>
<path d="M426.15 588.90 V645.70 M432.58 588.90 V645.70 M439.00 588.90 V645.70 M445.43 588.90 V645.70 M451.86 588.90 V645.70 M458.28 588.90 V645.70 M464.71 588.90 V645.70 M471.14 588.90 V645.70 M477.56 588.90 V645.70 M483.99 588.90 V645.70 M490.41 588.90 V645.70 M496.84 588.90 V645.70 M503.27 588.90 V645.70 M509.69 588.90 V645.70 M516.12 588.90 V645.70 M522.55 588.90 V645.70 M528.97 588.90 V645.70 M535.40 588.90 V645.70 M541.83 588.90 V645.70 M548.25 588.90 V645.70 M554.68 588.90 V645.70 M561.11 588.90 V645.70 M567.53 588.90 V645.70 M573.96 588.90 V645.70 M580.39 588.90 V645.70 M586.81 588.90 V645.70 M593.24 588.90 V645.70 M599.67 588.90 V645.70 M606.09 588.90 V645.70 M612.52 588.90 V645.70 M618.94 588.90 V645.70 M625.37 588.90 V645.70 M631.80 588.90 V645.70 M638.22 588.90 V645.70 M644.65 588.90 V645.70 M651.08 588.90 V645.70 M657.50 588.90 V645.70 M663.93 588.90 V645.70 M670.36 588.90 V645.70 M676.78 588.90 V645.70 M683.21 588.90 V645.70 M689.64 588.90 V645.70 M696.06 588.90 V645.70 M702.49 588.90 V645.70 M708.92 588.90 V645.70 M715.34 588.90 V645.70 M721.77 588.90 V645.70 M728.20 588.90 V645.70 M734.62 588.90 V645.70 M741.05 588.90 V645.70 M747.47 588.90 V645.70 M753.90 588.90 V645.70 M760.33 588.90 V645.70 M766.75 588.90 V645.70 M773.18 588.90 V645.70 M779.61 588.90 V645.70 M786.03 588.90 V645.70 M792.46 588.90 V645.70 M798.89 588.90 V645.70 M805.31 588.90 V645.70 M811.74 588.90 V645.70 M818.17 588.90 V645.70 M824.59 588.90 V645.70 M831.02 588.90 V645.70 M425.30 588.90 H833.10 M425.30 594.02 H833.10 M425.30 599.14 H833.10 M425.30 604.26 H833.10 M425.30 609.38 H833.10 M425.30 614.50 H833.10 M425.30 619.62 H833.10 M425.30 624.74 H833.10 M425.30 629.86 H833.10 M425.30 634.98 H833.10 M425.30 640.10 H833.10 M425.30 645.22 H833.10" stroke="#008000" stroke-width="0.7" fill="none"/>
<path d="M425.90 589.95 H833.10" stroke="#8a7a00" stroke-width="1.6"/>
<path d="M425.30 645.3 H833.10" stroke="#00a000" stroke-width="0.9"/>
<path d="M611.8 491 V549" stroke="#f0f0f0" stroke-width="0.9" stroke-dasharray="1.5 1.4"/>
<path d="M612.0 527.6 L625.0 527.4 L626.0 528.2 L632.0 528.2 L633.0 527.0 L650.0 526.2 L655.0 525.6 L668.0 525.0 L680.0 524.6 L700.0 524.0 L720.0 523.4 L760.0 522.9 L800.0 522.6 L833.0 522.5" stroke="#e0a070" stroke-width="0.80" fill="none" stroke-linejoin="round"/>
<path d="M607.0 526.8 L618.0 526.8 L620.0 527.0 L640.0 526.7 L642.0 526.0 L655.0 525.6 L665.0 524.6 L690.0 523.6 L700.0 523.2 L720.0 522.9 L740.0 522.6 L780.0 522.4 L833.0 522.3" stroke="#f0e400" stroke-width="1.05" fill="none" stroke-linejoin="round"/>
<path d="M607.0 531.4 L610.6 531.2 L611.6 521.4 L612.3 518.6 L613.4 520.0 L614.4 519.0 L615.5 518.3 L617.2 518.4 L618.8 521.6 L620.1 521.4 L621.4 518.5 L622.7 521.0 L624.2 520.3 L625.7 516.9 L627.3 519.5 L628.8 519.6 L630.6 520.5 L632.1 519.9 L633.7 518.9 L634.8 519.4 L636.0 519.2 L637.7 520.0 L638.9 520.4 L640.5 519.5 L642.3 519.6 L643.4 520.4 L645.3 520.9 L646.6 519.4 L647.8 517.8 L648.9 518.7 L650.7 518.0 L652.2 521.1 L653.9 518.8 L655.3 521.0 L656.4 518.3 L657.6 519.5 L658.8 517.7 L660.2 519.8 L661.8 519.6 L663.4 517.8 L665.1 520.9 L666.5 519.1 L668.0 517.8 L669.2 518.2 L670.3 517.6 L671.4 518.8 L672.9 518.1 L674.2 518.9 L676.0 521.3 L677.4 517.9 L678.7 518.5 L679.9 517.6 L681.3 518.1 L682.4 519.5 L684.1 520.1 L685.5 518.1 L687.0 520.4 L688.2 520.5 L689.9 520.5 L691.6 518.3 L692.9 516.4 L694.1 520.0 L695.5 521.0 L697.4 518.8 L698.6 518.1 L700.2 520.8 L701.6 519.8 L702.7 519.9 L704.4 520.2 L705.5 520.3 L707.3 521.0 L708.6 520.9 L709.8 517.8 L711.6 520.3 L713.3 521.0 L714.7 519.3 L715.7 520.9 L717.1 520.8 L718.9 520.4 L720.2 518.3 L721.7 518.2 L722.8 520.7 L724.2 519.4 L725.6 520.7 L727.1 518.3 L728.2 517.2 L729.4 518.9 L730.9 518.4 L732.4 520.1 L733.9 518.1 L735.6 519.0 L737.3 520.6 L738.8 519.0 L740.4 518.8 L741.9 520.6 L743.7 520.6 L745.2 520.6 L746.3 517.5 L747.4 517.9 L749.0 520.0 L750.1 519.7 L751.2 520.4 L752.4 520.6 L753.9 520.8 L755.0 518.6 L756.3 517.7 L758.0 517.1 L759.4 517.1 L760.9 518.9 L762.8 520.0 L763.9 517.7 L765.1 517.5 L767.0 520.1 L768.1 520.5 L769.7 516.8 L771.1 517.3 L772.7 520.0 L774.5 517.3 L775.9 518.3 L777.7 518.0 L779.2 517.9 L780.3 517.2 L781.6 518.2 L782.9 518.9 L784.2 517.1 L785.2 519.8 L786.4 518.8 L787.5 520.1 L788.9 520.2 L790.4 519.6 L791.7 520.2 L793.2 518.5 L794.3 517.5 L796.0 518.0 L797.0 520.2 L798.6 518.1 L799.9 518.7 L801.3 518.0 L803.2 519.1 L805.0 518.2 L806.0 518.5 L807.5 517.8 L808.5 518.0 L809.9 516.0 L811.1 519.2 L812.7 519.5 L814.5 518.5 L816.4 517.6 L818.0 517.2 L819.8 519.4 L821.5 517.5 L823.0 520.2 L824.7 519.2 L826.3 519.6 L827.4 517.5 L828.5 520.2 L830.0 519.4 L831.5 517.0" stroke="#00d000" stroke-width="0.65" fill="none" stroke-linejoin="round"/>
<path d="M607.0 531.9 L610.6 531.9 L611.6 521.7 L612.3 520.3 L613.4 521.1 L614.4 519.2 L615.6 521.1 L617.1 519.7 L618.7 521.2 L620.2 518.5 L621.5 521.1 L623.0 518.2 L624.2 520.8 L625.8 519.3 L627.3 520.0 L629.1 518.9 L630.9 518.1 L632.6 521.9 L633.9 518.9 L635.1 520.4 L636.5 521.8 L638.3 520.0 L639.9 518.9 L641.4 517.3 L642.8 519.2 L644.1 519.2 L645.1 521.0 L646.2 521.7 L648.0 519.1 L649.3 521.9 L650.7 519.6 L651.7 518.3 L653.0 521.6 L654.2 519.9 L655.5 521.7 L657.3 520.4 L659.1 520.1 L660.2 520.8 L661.8 520.4 L662.9 521.5 L664.3 519.2 L666.0 521.7 L667.6 519.0 L668.9 518.5 L670.1 521.4 L671.3 521.4 L672.7 518.3 L673.8 519.1 L675.0 518.8 L676.8 520.7 L678.2 519.8 L679.5 518.0 L681.4 518.2 L682.9 521.1 L684.2 518.7 L685.6 521.5 L687.4 517.3 L689.2 519.5 L690.2 519.2 L691.9 521.0 L693.1 518.0 L694.6 520.3 L696.2 520.2 L697.7 519.4 L698.9 521.3 L700.1 518.1 L701.7 520.3 L702.8 519.6 L704.1 518.4 L705.1 518.7 L707.0 520.1 L708.4 518.4 L710.3 520.3 L711.3 519.5 L712.7 518.5 L714.5 517.3 L715.9 520.2 L717.6 520.4 L718.8 521.3 L720.5 518.3 L722.2 518.6 L723.7 518.1 L725.0 520.0 L726.2 518.9 L728.1 516.4 L729.4 520.9 L731.1 521.3 L732.4 518.1 L734.0 517.4 L735.4 518.8 L736.5 517.3 L737.8 521.1 L739.7 518.1 L741.5 520.6 L742.5 519.1 L744.3 518.0 L746.1 517.4 L747.9 518.7 L748.9 520.9 L750.6 520.8 L751.8 521.0 L753.1 520.1 L754.3 517.2 L756.1 519.7 L757.2 518.1 L759.0 521.0 L760.3 518.9 L762.1 517.9 L763.8 520.5 L765.3 518.5 L766.6 520.3 L767.8 520.2 L768.9 517.3 L770.2 521.1 L772.0 518.3 L773.1 519.2 L774.5 518.1 L776.1 519.9 L777.9 519.9 L779.6 518.4 L780.9 520.2 L782.2 518.2 L784.0 519.5 L785.3 521.2 L786.5 520.4 L788.4 517.6 L790.2 520.6 L791.2 518.4 L792.4 521.1 L794.2 518.7 L795.6 518.2 L797.5 517.6 L799.0 518.1 L800.1 518.0 L801.7 519.8 L802.7 518.5 L803.9 518.4 L805.6 519.4 L806.7 518.8 L808.2 517.6 L809.9 518.8 L811.1 521.0 L812.7 518.6 L814.4 521.2 L815.6 520.1 L816.6 520.8 L818.4 518.8 L819.8 517.1 L821.3 520.8 L822.9 518.7 L824.0 518.3 L825.9 517.6 L827.6 521.1 L828.7 521.0 L830.1 517.4 L831.5 520.8" stroke="#e040e0" stroke-width="0.65" fill="none" stroke-linejoin="round"/>
<path d="M607.0 532.2 L610.6 531.9 L611.6 521.5 L612.3 521.1 L613.7 521.4 L614.8 518.9 L616.3 519.5 L617.5 520.9 L618.6 520.2 L619.6 521.3 L621.1 520.1 L622.4 519.6 L623.8 520.6 L625.2 518.0 L626.6 518.8 L628.3 519.7 L629.7 518.3 L631.1 518.2 L632.6 518.0 L633.7 520.8 L635.1 518.0 L636.5 521.6 L638.2 521.8 L640.0 518.6 L641.4 521.6 L642.6 520.9 L643.6 519.2 L644.8 521.3 L646.5 518.3 L648.3 518.6 L649.8 517.7 L650.9 521.5 L652.7 518.4 L653.8 519.8 L655.2 521.2 L656.7 521.2 L658.6 520.2 L660.3 518.7 L661.8 519.1 L663.2 518.3 L664.3 520.9 L665.8 521.5 L667.4 517.3 L668.6 520.1 L670.0 521.2 L671.2 518.6 L672.6 518.0 L673.8 519.9 L674.9 520.0 L676.1 521.3 L677.2 517.9 L679.0 520.6 L680.2 517.6 L681.7 518.9 L683.1 521.2 L684.3 520.3 L685.7 518.1 L686.7 519.7 L687.8 518.2 L689.3 520.0 L690.5 518.7 L691.5 521.0 L693.1 517.4 L694.8 519.3 L696.2 518.3 L697.4 517.5 L699.1 520.2 L700.8 518.4 L702.1 520.5 L703.4 519.9 L704.6 519.7 L705.8 520.3 L707.5 518.6 L708.8 518.3 L710.3 520.1 L712.2 519.2 L713.8 520.7 L715.5 519.5 L716.7 519.7 L718.5 516.4 L720.3 518.6 L721.4 517.4 L722.9 520.0 L724.0 519.6 L725.7 520.5 L726.8 520.6 L728.6 517.6 L729.7 517.3 L731.5 519.7 L733.0 518.3 L734.1 520.1 L735.4 517.6 L736.7 520.0 L738.0 520.9 L739.7 518.6 L741.1 520.2 L742.7 519.2 L744.5 517.4 L745.7 517.0 L747.4 520.1 L748.8 520.2 L750.2 518.4 L751.5 520.8 L752.7 519.8 L753.8 519.5 L755.5 519.8 L757.0 518.4 L758.4 520.6 L760.2 517.1 L761.4 520.6 L762.8 520.5 L764.2 519.1 L765.9 519.6 L767.2 517.6 L768.8 520.0 L770.2 520.1 L771.3 518.8 L772.5 517.8 L774.1 520.4 L775.3 518.0 L776.7 517.6 L777.9 520.9 L779.0 520.8 L780.3 520.9 L782.0 518.7 L783.6 517.4 L784.9 517.1 L786.6 519.8 L788.2 518.9 L789.7 518.6 L791.6 518.7 L793.2 518.7 L794.9 520.5 L796.5 520.4 L798.1 518.8 L799.7 517.4 L801.4 519.9 L802.6 518.7 L804.1 518.6 L806.0 517.7 L807.7 518.6 L809.6 517.2 L810.7 520.1 L812.2 517.4 L813.7 519.9 L815.2 520.3 L816.6 520.8 L818.2 518.6 L819.3 520.9 L820.4 518.1 L821.4 518.7 L823.0 518.4 L824.2 520.0 L825.7 517.9 L827.1 517.8 L828.8 520.2 L830.2 519.2 L832.0 518.4" stroke="#00d8d8" stroke-width="0.65" fill="none" stroke-linejoin="round"/>
<path d="M612.3 520.7 L613.6 519.8 L615.3 519.1 L616.6 519.1 L617.9 518.0 L619.2 518.6 L620.6 519.3 L622.2 519.0 L624.0 517.9 L625.8 520.5 L627.5 518.4 L629.4 520.0 L630.5 518.2 L632.2 518.9 L634.0 520.5 L635.8 519.8 L637.4 520.8 L639.2 518.3 L640.6 520.3 L642.4 519.6 L643.7 518.1 L644.7 519.2 L646.1 519.3 L647.9 517.6 L649.3 519.6 L651.1 518.9 L653.0 517.8 L654.5 517.6 L656.2 520.8 L658.0 519.3 L659.8 517.6 L661.4 518.7 L662.7 519.1 L664.4 518.2 L665.8 519.4 L667.1 520.4 L668.5 518.4 L670.4 519.7 L671.7 518.5 L673.2 519.6 L674.3 520.0 L675.8 517.5 L676.8 518.0 L678.3 519.7 L680.1 519.5 L681.7 519.8 L683.3 518.0 L684.7 520.0 L685.9 517.4 L687.7 519.6 L689.4 520.1 L690.7 518.3 L692.0 518.8 L693.8 517.4 L694.8 517.6 L696.4 520.5 L697.4 518.6 L699.2 520.7 L700.6 517.5 L701.8 516.1 L703.4 517.6 L704.5 520.3 L705.5 519.7 L707.1 517.4 L708.8 520.2 L709.9 519.4 L711.3 520.4 L713.1 518.1 L714.7 520.0 L716.0 519.7 L717.8 517.8 L719.3 518.6 L720.4 519.9 L722.0 519.3 L723.4 519.8 L725.1 519.0 L726.1 520.5 L727.9 518.2 L729.7 519.9 L731.0 518.5 L732.4 519.4 L734.2 519.8 L735.2 517.9 L736.7 519.8 L737.7 519.9 L739.5 518.9 L741.3 519.8 L743.1 518.1 L744.6 519.7 L746.3 520.2 L747.8 519.3 L749.0 517.7 L750.7 518.5 L752.5 519.6 L754.0 520.0 L755.4 518.5 L756.6 517.5 L758.2 518.1 L759.6 518.7 L760.6 520.4 L761.7 519.1 L762.9 518.9 L764.3 516.9 L766.1 518.6 L767.4 519.6 L769.2 519.6 L771.1 516.4 L772.2 516.4 L774.0 518.4 L775.8 517.0 L777.2 517.2 L778.4 518.8 L780.3 519.2 L781.7 517.4 L783.6 516.4 L784.9 520.0 L786.7 517.0 L788.3 519.1 L789.4 517.3 L791.2 519.2 L792.7 519.5 L794.0 517.7 L795.5 517.4 L796.6 518.8 L797.8 516.9 L799.0 520.2 L800.8 517.3 L801.8 520.1 L803.4 518.4 L805.2 518.5 L806.3 517.1 L807.8 517.3 L809.0 518.3 L810.3 519.8 L811.4 518.6 L813.2 517.2 L814.3 520.0 L815.5 518.5 L816.7 517.5 L818.6 520.4 L819.7 517.8 L820.7 519.4 L822.6 516.9 L823.9 517.0 L825.4 517.5 L827.2 517.6 L828.3 517.4 L830.0 517.5 L831.1 519.0 L832.3 517.5" stroke="#d8e4ff" stroke-width="0.65" fill="none" stroke-linejoin="round"/>
<path d="M607.0 531.0 L610.6 531.3 L611.6 521.0 L612.3 519.8 L613.4 520.4 L615.0 517.7 L616.3 520.8 L617.8 517.5 L619.2 520.9 L620.4 520.8 L621.5 518.9 L622.5 519.5 L624.0 517.9 L625.7 520.9 L627.3 518.9 L628.4 520.9 L629.8 519.4 L631.3 517.4 L632.5 518.1 L633.8 519.2 L635.4 517.5 L636.9 519.4 L638.0 520.8 L639.0 517.8 L640.5 518.4 L641.8 517.8 L643.6 517.9 L645.3 517.9 L647.1 518.8 L648.9 519.3 L650.7 520.3 L652.0 518.6 L653.8 520.4 L655.6 519.8 L657.4 520.9 L658.8 519.7 L660.3 517.4 L661.7 517.2 L663.6 520.2 L665.2 520.4 L667.0 517.2 L668.2 519.8 L669.7 520.8 L670.9 519.2 L672.8 518.2 L674.4 517.5 L676.2 519.1 L677.7 519.2 L678.8 517.5 L680.1 518.2 L681.2 519.2 L682.8 519.3 L683.9 519.8 L685.4 519.4 L686.7 517.9 L688.2 518.5 L689.2 518.4 L690.4 519.2 L691.7 520.9 L693.4 517.5 L695.1 518.7 L696.5 518.6 L697.6 517.8 L699.3 517.5 L700.6 519.6 L702.3 520.1 L704.0 519.8 L705.4 520.0 L707.3 517.3 L708.3 519.9 L709.7 520.6 L711.1 519.9 L712.6 518.3 L714.0 519.7 L715.4 519.0 L716.7 519.9 L718.1 518.5 L719.4 517.3 L720.9 517.1 L722.2 520.1 L724.1 517.5 L725.9 516.0 L727.3 520.3 L728.8 520.6 L730.3 519.4 L731.6 519.0 L733.5 519.3 L734.6 518.1 L736.1 518.9 L737.9 518.5 L739.5 520.6 L741.0 519.8 L742.3 520.5 L743.7 517.0 L745.3 519.8 L747.1 518.2 L748.4 518.6 L749.6 517.2 L751.1 517.9 L752.7 516.7 L754.4 517.7 L755.4 517.7 L756.9 519.2 L758.4 518.7 L760.0 518.6 L761.5 518.1 L762.6 519.5 L763.7 517.2 L765.4 519.0 L766.5 516.5 L767.8 519.4 L768.9 517.6 L770.8 518.8 L772.2 517.9 L773.7 520.3 L775.2 517.4 L777.0 517.8 L778.8 517.7 L780.6 518.5 L781.8 518.1 L783.0 517.7 L784.5 519.7 L785.6 517.9 L787.5 517.7 L788.6 518.6 L790.0 516.8 L791.7 517.9 L792.9 517.6 L793.9 519.2 L795.1 519.3 L796.3 519.8 L797.7 519.8 L798.8 517.9 L800.2 520.3 L802.0 518.5 L803.4 517.0 L804.7 520.1 L806.0 517.5 L807.2 520.0 L808.7 518.7 L810.4 518.0 L811.9 517.7 L812.9 517.2 L814.2 519.2 L815.7 517.9 L817.0 516.8 L818.2 517.0 L819.5 518.1 L821.2 520.0 L822.3 517.1 L823.9 517.9 L825.5 519.3 L827.2 517.9 L828.4 517.0 L830.1 517.8 L831.2 517.3 L832.5 516.7" stroke="#f4f4f4" stroke-width="0.80" fill="none" stroke-linejoin="round"/>
</svg>
<svg class="a" style="left:447.90px;top:477.6px" width="7.8" height="7.8" viewBox="0 0 12 12"><rect width="12" height="12" fill="#fff"/><path d="M2.4 6 L4.8 8.6 L9.8 3" stroke="#222" stroke-width="1.3" fill="none"/></svg>
<div class="t" style="left:458.10px;top:476.90px;font-size:7.77px;transform:scaleX(1.0210);color:#e8e800;-webkit-text-stroke:0.08px;">Motherboard</div>
<svg class="a" style="left:509.00px;top:477.6px" width="7.8" height="7.8" viewBox="0 0 12 12"><rect width="12" height="12" fill="#fff"/><path d="M2.4 6 L4.8 8.6 L9.8 3" stroke="#222" stroke-width="1.3" fill="none"/></svg>
<div class="t" style="left:519.20px;top:476.90px;font-size:7.77px;transform:scaleX(0.8612);color:#f0f0f0;-webkit-text-stroke:0.08px;">CPU</div>
<svg class="a" style="left:539.20px;top:477.6px" width="7.8" height="7.8" viewBox="0 0 12 12"><rect width="12" height="12" fill="#fff"/><path d="M2.4 6 L4.8 8.6 L9.8 3" stroke="#222" stroke-width="1.3" fill="none"/></svg>
<div class="t" style="left:549.40px;top:476.90px;font-size:7.77px;transform:scaleX(0.9038);color:#00e000;-webkit-text-stroke:0.08px;">CPU Core #1</div>
<svg class="a" style="left:597.40px;top:477.6px" width="7.8" height="7.8" viewBox="0 0 12 12"><rect width="12" height="12" fill="#fff"/><path d="M2.4 6 L4.8 8.6 L9.8 3" stroke="#222" stroke-width="1.3" fill="none"/></svg>
<div class="t" style="left:607.60px;top:476.90px;font-size:7.77px;transform:scaleX(0.9038);color:#00e0e0;-webkit-text-stroke:0.08px;">CPU Core #2</div>
<svg class="a" style="left:655.20px;top:477.6px" width="7.8" height="7.8" viewBox="0 0 12 12"><rect width="12" height="12" fill="#fff"/><path d="M2.4 6 L4.8 8.6 L9.8 3" stroke="#222" stroke-width="1.3" fill="none"/></svg>
<div class="t" style="left:665.40px;top:476.90px;font-size:7.77px;transform:scaleX(0.9038);color:#f040f0;-webkit-text-stroke:0.08px;">CPU Core #3</div>
<svg class="a" style="left:713.00px;top:477.6px" width="7.8" height="7.8" viewBox="0 0 12 12"><rect width="12" height="12" fill="#fff"/><path d="M2.4 6 L4.8 8.6 L9.8 3" stroke="#222" stroke-width="1.3" fill="none"/></svg>
<div class="t" style="left:723.20px;top:476.90px;font-size:7.77px;transform:scaleX(0.9038);color:#e8e8e8;-webkit-text-stroke:0.08px;">CPU Core #4</div>
<svg class="a" style="left:770.90px;top:477.6px" width="7.8" height="7.8" viewBox="0 0 12 12"><rect width="12" height="12" fill="#fff"/><path d="M2.4 6 L4.8 8.6 L9.8 3" stroke="#222" stroke-width="1.3" fill="none"/></svg>
<div class="t" style="left:781.10px;top:476.90px;font-size:7.77px;transform:scaleX(0.8826);color:#f0b070;-webkit-text-stroke:0.08px;">ORICO</div>
<div class="t" style="left:402.93px;top:487.30px;font-size:7.77px;transform:scaleX(0.8890);color:#fff;">100<span style="font-size:5.6px;position:relative;top:-2.2px">°</span>C</div>
<div class="t" style="left:410.64px;top:545.00px;font-size:7.77px;transform:scaleX(0.8860);color:#fff;">0<span style="font-size:5.6px;position:relative;top:-2.2px">°</span>C</div>
<div class="t" style="left:585.00px;top:550.90px;font-size:7.67px;transform:scaleX(0.9124);color:#fff;font-weight:bold;">11:11:31</div>
<div class="t" style="left:836.00px;top:513.60px;font-size:7.56px;transform:scaleX(0.9168);color:#d8e4ff;">54</div>
<div class="t" style="left:845.00px;top:513.00px;font-size:6.93px;color:#f0f000;font-weight:bold;">53</div>
<div class="t" style="left:845.00px;top:515.80px;font-size:6.93px;color:#f0f0a0;font-weight:bold;">46</div>
<div class="t" style="left:581.19px;top:576.00px;font-size:7.67px;transform:scaleX(0.8868);color:#e8e800;font-weight:bold;">CPU Usage</div>
<div class="t" style="left:620.60px;top:575.80px;font-size:7.67px;transform:scaleX(0.9633);color:#fff;">|</div>
<div class="t" style="left:627.60px;top:576.00px;font-size:7.67px;transform:scaleX(0.9155);color:#00e000;font-weight:bold;">CPU Throttling</div>
<div class="t" style="left:404.42px;top:585.40px;font-size:7.56px;transform:scaleX(0.9311);color:#fff;">100%</div>
<div class="t" style="left:412.12px;top:641.20px;font-size:7.56px;transform:scaleX(0.9408);color:#fff;">0%</div>
<div class="t" style="left:835.80px;top:585.40px;font-size:7.56px;transform:scaleX(0.9311);color:#e8e800;">100%</div>
<div class="t" style="left:835.80px;top:641.20px;font-size:7.56px;transform:scaleX(0.9408);color:#00e000;">0%</div>
<div class="t" style="left:389.80px;top:679.20px;font-size:7.93px;transform:scaleX(0.9456);color:#111;">Remaining Battery:</div>
<div class="a" style="left:461.60px;top:676.30px;width:51.60px;height:15.50px;background:#000;"></div>
<div class="t" style="left:469.42px;top:678.70px;font-size:7.56px;transform:scaleX(0.9635);color:#00d800;font-weight:bold;">No battery</div>
<div class="t" style="left:527.60px;top:679.20px;font-size:7.93px;transform:scaleX(0.9259);color:#111;">Test Started:</div>
<div class="a" style="left:576.00px;top:676.30px;width:90.60px;height:15.50px;background:#000;"></div>
<div class="t" style="left:589.51px;top:678.70px;font-size:7.56px;transform:scaleX(0.9181);color:#00d800;font-weight:bold;">28.08.2025 11:11:31</div>
<div class="t" style="left:680.60px;top:679.20px;font-size:7.93px;transform:scaleX(0.9100);color:#111;">Elapsed Time:</div>
<div class="a" style="left:735.00px;top:676.30px;width:52.20px;height:15.50px;background:#000;"></div>
<div class="t" style="left:747.61px;top:678.70px;font-size:7.56px;transform:scaleX(0.8926);color:#00d800;font-weight:bold;">00:14:20</div>
<div class="a" style="left:390.40px;top:700.40px;width:46.90px;height:13.00px;background:#f6f6f6;border:0.7px solid #e0e0e0;border-radius:2.6px;"></div>
<div class="t" style="left:406.14px;top:702.70px;font-size:7.93px;transform:scaleX(0.9228);color:#a0a0a0;">Start</div>
<div class="a" style="left:442.60px;top:700.40px;width:46.80px;height:13.00px;background:#fdfdfd;border:0.7px solid #d0d0d0;border-bottom-color:#b8b8b8;border-radius:2.6px;"></div>
<div class="t" style="left:458.29px;top:702.70px;font-size:7.93px;transform:scaleX(0.9476);color:#111;">Stop</div>
<div class="a" style="left:506.30px;top:700.40px;width:46.60px;height:13.00px;background:#fdfdfd;border:0.7px solid #d0d0d0;border-bottom-color:#b8b8b8;border-radius:2.6px;"></div>
<div class="t" style="left:521.25px;top:702.70px;font-size:7.93px;transform:scaleX(0.8832);color:#111;">Clear</div>
<div class="a" style="left:558.50px;top:700.40px;width:46.30px;height:13.00px;background:#fdfdfd;border:0.7px solid #d0d0d0;border-bottom-color:#b8b8b8;border-radius:2.6px;"></div>
<div class="t" style="left:573.94px;top:702.70px;font-size:7.93px;transform:scaleX(0.8548);color:#111;">Save</div>
<div class="a" style="left:621.70px;top:700.40px;width:46.60px;height:13.00px;background:#fdfdfd;border:0.7px solid #d0d0d0;border-bottom-color:#b8b8b8;border-radius:2.6px;"></div>
<div class="t" style="left:634.40px;top:702.70px;font-size:7.93px;transform:scaleX(0.8612);color:#111;">CPUID</div>
<div class="a" style="left:674.20px;top:700.40px;width:46.30px;height:13.00px;background:#fdfdfd;border:0.7px solid #d0d0d0;border-bottom-color:#b8b8b8;border-radius:2.6px;"></div>
<div class="t" style="left:677.76px;top:702.70px;font-size:7.93px;transform:scaleX(0.9187);color:#111;">Preferences</div>
<div class="a" style="left:821.00px;top:700.40px;width:46.00px;height:13.00px;background:#f6f6f6;border:0.7px solid #e0e0e0;border-radius:2.6px;"></div>
<div class="t" style="left:835.01px;top:702.70px;font-size:7.93px;transform:scaleX(0.8894);color:#a0a0a0;">Close</div>
</div></body></html>
